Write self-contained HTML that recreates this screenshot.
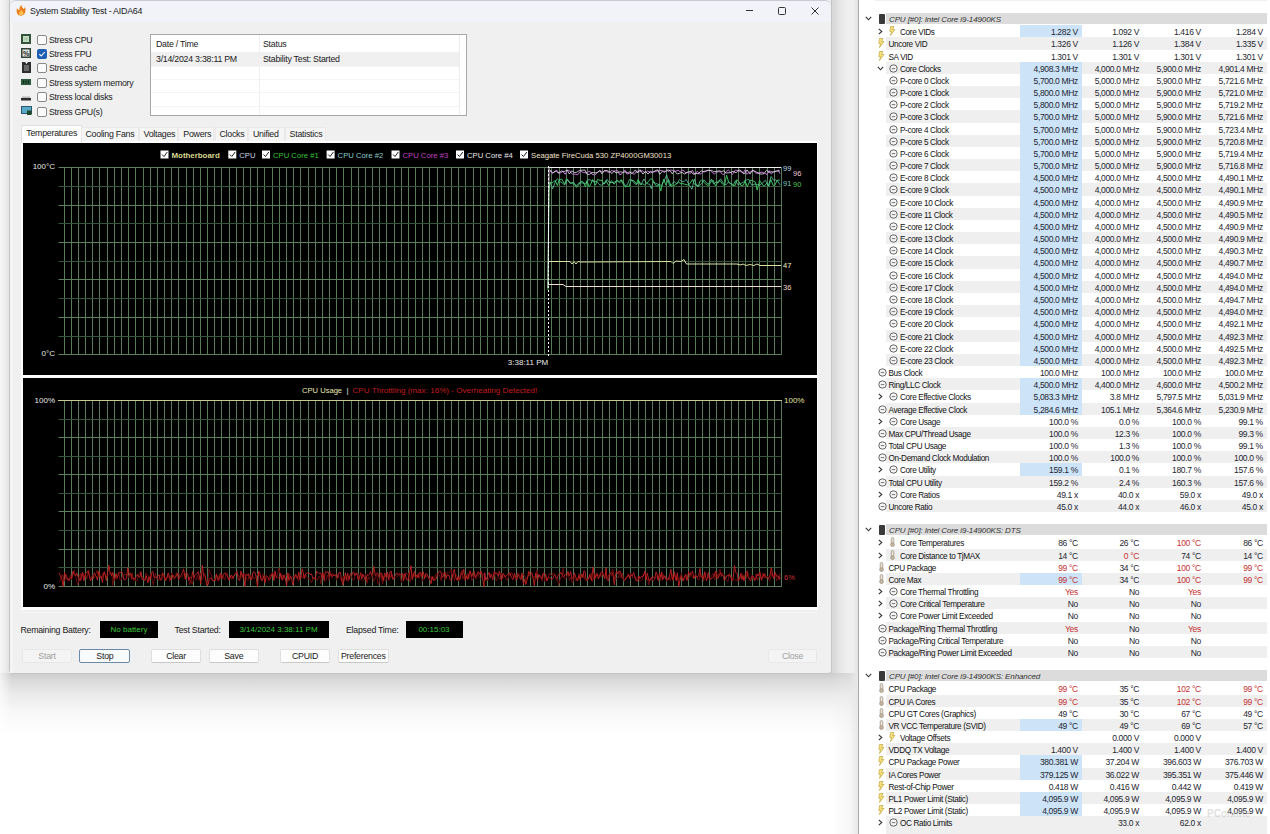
<!DOCTYPE html><html><head><meta charset="utf-8"><style>
*{margin:0;padding:0;box-sizing:border-box}
html,body{width:1270px;height:834px;overflow:hidden;background:#ffffff;font-family:"Liberation Sans", sans-serif;position:relative}
.a{position:absolute;white-space:nowrap}
.ui{font-size:8.8px;letter-spacing:-0.25px;color:#1a1a1a;line-height:10px}
.btn{position:absolute;height:14px;background:#fdfdfd;border:1px solid #dedede;border-bottom-color:#c8c8c8;border-radius:2px;font-size:8.8px;letter-spacing:-0.25px;line-height:12.5px;text-align:center;color:#1a1a1a}
.blk{position:absolute;height:17px;background:#000;color:#3cc83c;font-size:8px;line-height:17px;text-align:center}
.hw{font-size:8.2px;letter-spacing:-0.35px;line-height:12px;color:#111}
.v{position:absolute;text-align:right;font-size:8.5px;letter-spacing:-0.35px;line-height:12px;color:#1e2630;white-space:nowrap}
</style></head><body>

<div class="a" style="left:0;top:0;width:9px;height:700px;background:linear-gradient(90deg,#f7f7f7 0px,#ececec 6px,#e2e2e2 9px)"></div>
<div class="a" style="left:831px;top:0;width:27px;height:674px;background:linear-gradient(90deg,#d8d8d8 1px,#dadada 4px,#e6e6e6 9px,#efefef 17px,#eeeeee 22px,#e5e5e5 26px)"></div>
<div class="a" style="left:0;top:673px;width:858px;height:62px;background:linear-gradient(180deg,#cdcdcd 0px,#dadada 8px,#ebebeb 22px,#f8f8f8 40px,#ffffff 62px)"></div>
<div class="a" style="left:0;top:673px;width:12px;height:62px;background:linear-gradient(90deg,rgba(255,255,255,0.7),rgba(255,255,255,0))"></div>
<div class="a" style="left:831px;top:673px;width:27px;height:161px;background:linear-gradient(90deg,rgba(236,236,236,0) 0px,rgba(236,236,236,0.4) 18px,#e8e8e8 27px)"></div>
<div class="a" style="left:9px;top:0;width:823px;height:674px;background:#f0f0f0;border:1px solid #c4c4c4;border-top:none;border-radius:0 0 4px 4px">
</div>
<div class="a" style="left:10px;top:0;width:821px;height:22px;background:#f1f3f9;border-top:1px solid #c8ccd4;border-radius:6px 6px 0 0"></div>
<svg class="a" style="left:15.5px;top:5px" width="10" height="11" viewBox="0 0 10 11"><path d="M1 3 C2 5 3 5 3.5 5 C3 3 4 1 5.5 0 C5.5 2 7 3 7.5 4 C8 3.5 8.5 3 9 2 C10 5 9.5 8 8 9.5 C6.5 11 3 11 1.8 9.5 C0.5 8 0.3 5 1 3Z" fill="#e8801c"/><path d="M5 5 C6 6.5 8 7 7.5 9 C7 10.5 3.5 10.5 3 9 C2.7 7.5 4 7 5 5Z" fill="#ffbe50"/></svg>
<div class="a" style="left:30px;top:6px;font-size:8.9px;letter-spacing:-0.25px;line-height:11px;color:#1a1a1a">System Stability Test - AIDA64</div>
<div class="a" style="left:746px;top:10px;width:7px;height:1px;background:#333"></div>
<div class="a" style="left:778px;top:7px;width:8px;height:8px;border:1px solid #333;border-radius:1.5px"></div>
<svg class="a" style="left:811px;top:7px" width="8" height="8" viewBox="0 0 8 8"><path d="M0.5 0.5L7.5 7.5M7.5 0.5L0.5 7.5" stroke="#333" stroke-width="1"/></svg>
<svg class="a" style="left:21px;top:34px" width="10" height="10" viewBox="0 0 10 10"><rect x="0" y="0" width="10" height="10" fill="#34543a"/><rect x="2" y="2" width="6" height="6" fill="#c4dcc4"/><rect x="3.5" y="3.5" width="3" height="3" fill="#a8c8a8"/></svg>
<div class="a" style="left:37px;top:34.5px;width:10px;height:10px;background:#fafafa;border:1px solid #8a8a8a;border-radius:2px"></div>
<div class="a ui" style="left:49px;top:34.6px">Stress CPU</div>
<svg class="a" style="left:21px;top:48px" width="10" height="10" viewBox="0 0 10 10"><rect x="0.75" y="0.75" width="8.5" height="8.5" fill="#dfe6df" stroke="#34443a" stroke-width="1.5"/><text x="5" y="8" text-anchor="middle" font-family="Liberation Sans" font-size="7" font-weight="bold" fill="#222">%</text></svg>
<div class="a" style="left:37px;top:48.9px;width:10px;height:10px;background:#1e5fb4;border-radius:2px"></div>
<svg class="a" style="left:37px;top:48.9px" width="10" height="10" viewBox="0 0 10 10"><path d="M2.3 5.2L4.2 7L7.8 3" stroke="#fff" stroke-width="1.1" fill="none"/></svg>
<div class="a ui" style="left:49px;top:49.0px">Stress FPU</div>
<svg class="a" style="left:21.5px;top:62px" width="9" height="11" viewBox="0 0 9 11"><path d="M0 0H3L4.5 2L6 0H9V11H0Z" fill="#2e2e2e"/><rect x="2" y="3" width="5" height="6" fill="#6a6a6a"/></svg>
<div class="a" style="left:37px;top:63.3px;width:10px;height:10px;background:#fafafa;border:1px solid #8a8a8a;border-radius:2px"></div>
<div class="a ui" style="left:49px;top:63.4px">Stress cache</div>
<svg class="a" style="left:21px;top:78.5px" width="10" height="6" viewBox="0 0 10 6"><rect width="10" height="6" fill="#2c5a3c"/><rect x="2" y="1.5" width="1" height="3" fill="#0e2a18"/><rect x="4.5" y="1.5" width="1" height="3" fill="#0e2a18"/><rect x="7" y="1.5" width="1" height="3" fill="#0e2a18"/></svg>
<div class="a" style="left:37px;top:77.7px;width:10px;height:10px;background:#fafafa;border:1px solid #8a8a8a;border-radius:2px"></div>
<div class="a ui" style="left:49px;top:77.8px">Stress system memory</div>
<svg class="a" style="left:21px;top:96px" width="10" height="5" viewBox="0 0 10 5"><rect x="1" y="0.5" width="8" height="1.5" fill="#b8b8b8"/><rect x="0" y="2" width="10" height="2.5" fill="#2e2e2e"/></svg>
<div class="a" style="left:37px;top:92.1px;width:10px;height:10px;background:#fafafa;border:1px solid #8a8a8a;border-radius:2px"></div>
<div class="a ui" style="left:49px;top:92.2px">Stress local disks</div>
<svg class="a" style="left:20.5px;top:106px" width="11" height="9" viewBox="0 0 11 9"><rect x="0.5" y="0.5" width="10" height="7" fill="#58a8c8" stroke="#2a5a70" stroke-width="1"/><rect x="6" y="4.5" width="4.5" height="4.5" fill="#1e4a2a"/></svg>
<div class="a" style="left:37px;top:106.5px;width:10px;height:10px;background:#fafafa;border:1px solid #8a8a8a;border-radius:2px"></div>
<div class="a ui" style="left:49px;top:106.6px">Stress GPU(s)</div>
<div class="a" style="left:150px;top:34px;width:317px;height:82px;background:#fff;border:1px solid #a8a8a8"></div>
<div class="a" style="left:151px;top:52px;width:309px;height:14px;background:#f0f0f0"></div>
<div class="a" style="left:151px;top:66px;width:309px;height:1px;background:#f4f4f4"></div>
<div class="a" style="left:151px;top:79px;width:309px;height:1px;background:#f4f4f4"></div>
<div class="a" style="left:151px;top:92px;width:309px;height:1px;background:#f4f4f4"></div>
<div class="a" style="left:151px;top:106px;width:309px;height:1px;background:#f4f4f4"></div>
<div class="a" style="left:259px;top:35px;width:1px;height:80px;background:#f0f0f0"></div>
<div class="a" style="left:459px;top:35px;width:1px;height:80px;background:#ececec"></div>
<div class="a ui" style="left:156px;top:38.5px">Date / Time</div>
<div class="a ui" style="left:263px;top:38.5px">Status</div>
<div class="a ui" style="left:156px;top:54px">3/14/2024 3:38:11 PM</div>
<div class="a ui" style="left:263px;top:54px">Stability Test: Started</div>
<div class="a" style="left:21px;top:141px;width:797px;height:469px;background:#fefefe"></div>
<div class="a" style="left:21px;top:612px;width:797px;height:1px;background:#f6f6f6"></div>
<div class="a" style="left:10px;top:22px;width:3px;height:651px;background:#f4f4f4"></div>
<div class="a" style="left:21px;top:125px;width:61px;height:17px;background:#fdfdfd;border:1px solid #e0e0e0;border-bottom:none"></div>
<div class="a ui" style="left:26.3px;top:127.5px">Temperatures</div>
<div class="a" style="left:80.5px;top:127px;width:58.099999999999994px;height:14px;background:#f5f5f5;border:1px solid #e9e9e9;border-bottom:none"></div>
<div class="a ui" style="left:85.5px;top:128.8px">Cooling Fans</div>
<div class="a" style="left:138.5px;top:127px;width:39.900000000000006px;height:14px;background:#f5f5f5;border:1px solid #e9e9e9;border-bottom:none"></div>
<div class="a ui" style="left:143.5px;top:128.8px">Voltages</div>
<div class="a" style="left:178.3px;top:127px;width:35.89999999999998px;height:14px;background:#f5f5f5;border:1px solid #e9e9e9;border-bottom:none"></div>
<div class="a ui" style="left:183.3px;top:128.8px">Powers</div>
<div class="a" style="left:214.5px;top:127px;width:33.19999999999999px;height:14px;background:#f5f5f5;border:1px solid #e9e9e9;border-bottom:none"></div>
<div class="a ui" style="left:219.5px;top:128.8px">Clocks</div>
<div class="a" style="left:248px;top:127px;width:36.69999999999999px;height:14px;background:#f5f5f5;border:1px solid #e9e9e9;border-bottom:none"></div>
<div class="a ui" style="left:253px;top:128.8px">Unified</div>
<div class="a" style="left:284.6px;top:127px;width:41.69999999999999px;height:14px;background:#f5f5f5;border:1px solid #e9e9e9;border-bottom:none"></div>
<div class="a ui" style="left:289.6px;top:128.8px">Statistics</div>
<svg class="a" style="left:0;top:0" width="830" height="620" viewBox="0 0 830 620">
<rect x="23" y="143" width="794" height="232" fill="#000"/>
<rect x="58" y="167" width="724" height="188" fill="#000"/>
<path d="M64.5 167.5V354.5M71.5 167.5V354.5M78.5 167.5V354.5M85.5 167.5V354.5M92.5 167.5V354.5M99.5 167.5V354.5M107.5 167.5V354.5M114.5 167.5V354.5M121.5 167.5V354.5M128.5 167.5V354.5M135.5 167.5V354.5M143.5 167.5V354.5M150.5 167.5V354.5M157.5 167.5V354.5M164.5 167.5V354.5M171.5 167.5V354.5M178.5 167.5V354.5M186.5 167.5V354.5M193.5 167.5V354.5M200.5 167.5V354.5M207.5 167.5V354.5M214.5 167.5V354.5M221.5 167.5V354.5M229.5 167.5V354.5M236.5 167.5V354.5M243.5 167.5V354.5M250.5 167.5V354.5M257.5 167.5V354.5M264.5 167.5V354.5M272.5 167.5V354.5M279.5 167.5V354.5M286.5 167.5V354.5M293.5 167.5V354.5M300.5 167.5V354.5M308.5 167.5V354.5M315.5 167.5V354.5M322.5 167.5V354.5M329.5 167.5V354.5M336.5 167.5V354.5M343.5 167.5V354.5M351.5 167.5V354.5M358.5 167.5V354.5M365.5 167.5V354.5M372.5 167.5V354.5M379.5 167.5V354.5M386.5 167.5V354.5M394.5 167.5V354.5M401.5 167.5V354.5M408.5 167.5V354.5M415.5 167.5V354.5M422.5 167.5V354.5M429.5 167.5V354.5M437.5 167.5V354.5M444.5 167.5V354.5M451.5 167.5V354.5M458.5 167.5V354.5M465.5 167.5V354.5M473.5 167.5V354.5M480.5 167.5V354.5M487.5 167.5V354.5M494.5 167.5V354.5M501.5 167.5V354.5M508.5 167.5V354.5M516.5 167.5V354.5M523.5 167.5V354.5M530.5 167.5V354.5M537.5 167.5V354.5M544.5 167.5V354.5M551.5 167.5V354.5M559.5 167.5V354.5M566.5 167.5V354.5M573.5 167.5V354.5M580.5 167.5V354.5M587.5 167.5V354.5M594.5 167.5V354.5M602.5 167.5V354.5M609.5 167.5V354.5M616.5 167.5V354.5M623.5 167.5V354.5M630.5 167.5V354.5M638.5 167.5V354.5M645.5 167.5V354.5M652.5 167.5V354.5M659.5 167.5V354.5M666.5 167.5V354.5M673.5 167.5V354.5M681.5 167.5V354.5M688.5 167.5V354.5M695.5 167.5V354.5M702.5 167.5V354.5M709.5 167.5V354.5M716.5 167.5V354.5M724.5 167.5V354.5M731.5 167.5V354.5M738.5 167.5V354.5M745.5 167.5V354.5M752.5 167.5V354.5M759.5 167.5V354.5M767.5 167.5V354.5M774.5 167.5V354.5M781.5 167.5V354.5M781.5 167.5V354.5" stroke="#587a58" stroke-width="1" fill="none"/><path d="M58.5 167.5H781.5M58.5 205.5H781.5M58.5 242.5H781.5M58.5 279.5H781.5M58.5 317.5H781.5M58.5 354.5H781.5" stroke="#5c805c" stroke-width="1" fill="none"/><path d="M58.5 186.5H781.5M58.5 223.5H781.5M58.5 261.5H781.5M58.5 298.5H781.5M58.5 336.5H781.5" stroke="#36543a" stroke-width="1" fill="none"/>
<polyline points="548,284.5 563,284.5 566,286.5 781,286.5" stroke="#f0dcc8" stroke-width="1" fill="none"/>
<polyline points="548,261.5 570,261.5 572,264 574,261.5 576,264 578,261.5 581,262 671,261.5 673,263.5 676,261 681,261.5 684,259.5 686,263.5 687,264 737,264 740,265 743,264 746,265.5 750,264.5 754,265.5 757,264 760,265.5 781,265.5" stroke="#dce2a4" stroke-width="1" fill="none"/>
<polyline points="548,290 549,190 550.0,182.6 552.8,182.7 555.1,180.4 557.4,185.5 559.4,179.6 561.8,179.2 564.7,184.3 566.4,178.9 568.0,180.4 569.6,182.7 572.3,183.2 574.5,184.4 576.4,187.2 579.0,184.7 580.9,181.2 583.4,182.2 585.5,186.8 587.0,180.6 589.2,187.0 590.8,184.1 592.7,179.5 595.5,185.2 597.4,179.6 600.0,180.3 602.1,180.4 603.8,184.2 605.9,180.6 608.7,185.5 611.4,180.6 614.1,184.2 616.9,180.6 619.5,181.6 621.1,179.6 623.0,183.9 625.1,186.9 627.4,186.1 629.2,186.4 631.0,180.4 633.8,180.5 636.5,183.9 638.2,179.1 640.1,184.7 642.7,183.8 644.5,184.9 646.3,183.5 648.7,181.2 650.5,178.9 652.6,179.3 654.6,183.6 656.6,186.3 659.0,184.6 660.8,190.9 663.6,179.0 665.8,184.9 668.6,179.4 671.1,186.4 673.6,185.5 675.6,184.6 678.3,182.3 681.0,183.6 683.0,183.7 684.7,184.2 687.4,184.9 689.9,183.7 692.5,179.5 694.1,183.9 695.9,184.7 698.3,186.5 699.9,181.3 701.7,180.2 704.1,182.5 706.0,184.4 708.2,185.6 710.9,182.0 712.8,179.9 715.5,185.9 718.2,181.1 720.4,181.1 722.5,184.1 724.4,185.8 726.6,175.2 728.5,181.8 730.8,184.2 732.6,185.3 735.1,185.5 736.8,179.7 739.2,181.9 741.0,185.7 743.5,185.1 745.1,180.7 747.3,186.8 750.2,180.1 752.6,180.7 755.4,182.1 757.2,190.1 759.6,180.5 762.2,184.2 764.0,186.4 766.8,183.3 768.8,186.4 770.8,179.5 773.1,185.3 774.6,185.6 777.2,180.3 779.8,180.0" stroke="#3cc25a" stroke-width="1" fill="none"/>
<polyline points="550.0,182.3 552.6,188.8 555.2,182.2 557.3,178.7 560.3,181.5 562.3,183.1 564.7,184.9 567.6,179.4 570.4,183.7 573.5,181.9 576.2,186.1 579.1,182.9 582.1,182.9 583.9,183.3 586.2,183.3 588.8,179.3 591.6,180.7 594.6,181.6 596.6,181.2 599.1,184.5 601.4,185.2 603.1,183.8 605.0,183.3 607.0,179.3 609.3,182.5 612.1,182.6 614.2,182.2 617.2,180.5 619.5,182.9 622.3,180.4 625.3,185.7 627.3,184.7 629.3,179.6 631.8,179.9 634.7,183.8 636.6,184.7 639.0,181.4 641.3,184.3 643.8,179.0 646.8,183.6 649.6,184.3 651.3,188.6 653.3,182.0 655.8,183.4 658.9,184.5 661.4,185.5 663.9,181.3 666.7,174.8 669.5,185.5 672.0,184.7 673.8,181.4 676.8,183.9 679.4,179.6 682.1,181.7 684.3,181.2 686.2,179.4 688.9,184.5 691.9,189.3 694.3,179.1 696.6,185.4 698.6,186.0 701.5,183.9 704.0,179.8 706.1,182.5 708.5,184.1 711.3,179.1 713.6,184.0 716.0,182.0 717.9,183.0 720.6,178.8 723.6,183.5 726.0,184.8 728.4,182.0 730.6,183.5 733.5,184.7 735.4,180.7 738.0,184.8 740.3,183.7 743.1,182.4 745.9,180.1 748.8,179.5 751.8,185.3 754.5,184.1 757.5,184.6 759.7,185.3 762.6,182.9 765.4,180.2 768.3,185.7 771.1,176.5 773.5,180.2 775.1,179.7 777.5,180.9 780.4,185.2" stroke="#60d0a8" stroke-width="1" fill="none" opacity="0.75"/>
<polyline points="550.0,171.2 552.6,173.5 555.3,170.9 557.3,170.7 559.2,173.7 561.0,172.7 562.9,171.4 565.1,174.3 567.5,170.0 569.5,170.7 572.3,174.1 575.1,174.2 577.7,174.8 580.4,171.2 583.2,172.4 585.8,172.8 588.0,171.8 590.2,171.5 592.0,174.2 594.7,175.0 597.3,172.8 599.9,170.6 602.5,172.2 604.3,171.0 606.7,171.2 608.9,173.0 611.1,170.6 613.4,171.1 615.3,170.9 617.4,170.3 619.9,174.9 622.1,173.6 625.0,170.1 626.8,174.1 629.5,173.2 631.4,172.1 634.2,174.5 636.9,171.0 639.7,171.8 642.3,170.6 645.2,173.0 647.8,171.0 650.3,172.9 652.7,171.8 655.3,171.7 657.4,170.8 659.9,170.5 661.8,170.3 664.3,172.8 666.7,170.1 668.9,171.7 670.6,169.9 673.6,170.5 675.7,171.3 678.1,170.3 680.3,171.8 683.1,169.9 685.2,172.5 688.1,172.6 690.4,173.4 692.4,170.1 694.7,174.6 697.3,171.2 699.9,174.3 701.9,173.0 704.0,171.2 706.0,171.0 708.1,170.1 710.2,170.4 712.9,173.0 714.5,173.9 716.4,172.4 718.7,171.6 720.8,172.2 722.5,174.4 724.3,174.2 726.2,171.5 728.4,170.1 730.2,171.8 732.4,174.5 735.4,170.1 737.7,170.6 740.4,171.6 743.3,172.7 745.0,169.9 747.0,174.4 748.8,172.4 750.9,171.7 753.7,171.0 756.3,173.4 759.2,172.6 762.0,172.2 764.4,173.1 767.2,174.6 769.0,170.6 771.3,174.1 773.7,171.5 776.6,171.4 778.3,170.2 780.0,173.7" stroke="#c070d0" stroke-width="1" fill="none"/>
<polyline points="550.0,170.1 552.9,172.7 556.2,170.9 558.4,173.1 561.3,171.1 564.2,171.5 567.2,170.2 569.4,173.9 571.7,170.8 574.8,172.6 576.9,172.2 579.7,170.4 582.6,170.2 584.9,170.0 587.0,174.3 589.5,174.4 592.0,172.5 595.2,172.9 597.2,172.4 600.0,170.5 601.9,173.8 604.6,170.5 607.1,170.6 610.2,172.0 612.1,173.5 614.1,170.9 616.0,173.2 618.0,172.1 619.9,171.9 622.8,172.2 625.3,171.9 627.8,172.5 629.8,171.9 632.0,173.8 635.3,169.9 637.3,173.0 640.0,169.7 643.0,174.1 645.4,171.3 648.2,174.1 650.4,171.1 652.5,172.6 655.0,170.8 657.5,169.8 659.8,174.3 662.5,171.0 665.8,171.3 668.0,169.8 670.1,170.6 672.2,173.8 674.5,170.8 677.2,174.0 679.5,173.3 681.9,172.3 684.6,174.1 687.7,172.0 690.8,171.4 693.2,174.2 695.9,173.3 698.2,174.0 701.0,170.8 704.2,171.9 706.6,170.9 708.6,170.6 711.5,170.3 713.7,171.7 716.4,171.4 719.4,170.8 721.8,171.6 723.8,170.7 725.9,173.1 727.9,172.8 730.1,172.7 732.9,171.3 736.2,172.8 738.9,169.8 741.3,170.9 743.9,174.1 747.1,169.9 750.0,174.1 752.6,170.1 755.8,171.6 759.1,173.8 762.3,174.1 764.2,173.4 766.5,170.2 768.9,172.4 770.7,171.8 773.8,172.0 776.4,171.0 779.7,170.8" stroke="#e8e8f0" stroke-width="1" fill="none" opacity="0.8"/>
<polyline points="548,288 549,167.5 781,167.5" stroke="#f0f0f0" stroke-width="1" fill="none"/>
<path d="M548.5 166V357" stroke="#fff" stroke-width="1" stroke-dasharray="2,2"/>
<rect x="160.5" y="150.5" width="8" height="8" fill="#fff"/>
<path d="M162.0 154.5L164.0 156.5L167.3 152" stroke="#222" stroke-width="1" fill="none"/>
<text x="171.5" y="157.8" font-family="Liberation Sans" font-size="7.9" fill="#d8d890" font-weight="bold">Motherboard</text>
<rect x="228.3" y="150.5" width="8" height="8" fill="#fff"/>
<path d="M229.8 154.5L231.8 156.5L235.10000000000002 152" stroke="#222" stroke-width="1" fill="none"/>
<text x="239.3" y="157.8" font-family="Liberation Sans" font-size="7.7" fill="#c8d4e8">CPU</text>
<rect x="262" y="150.5" width="8" height="8" fill="#fff"/>
<path d="M263.5 154.5L265.5 156.5L268.8 152" stroke="#222" stroke-width="1" fill="none"/>
<text x="273" y="157.8" font-family="Liberation Sans" font-size="7.7" fill="#38c038">CPU Core #1</text>
<rect x="326.6" y="150.5" width="8" height="8" fill="#fff"/>
<path d="M328.1 154.5L330.1 156.5L333.40000000000003 152" stroke="#222" stroke-width="1" fill="none"/>
<text x="337.6" y="157.8" font-family="Liberation Sans" font-size="7.7" fill="#88c8c8">CPU Core #2</text>
<rect x="391.5" y="150.5" width="8" height="8" fill="#fff"/>
<path d="M393.0 154.5L395.0 156.5L398.3 152" stroke="#222" stroke-width="1" fill="none"/>
<text x="402.5" y="157.8" font-family="Liberation Sans" font-size="7.7" fill="#c040c0">CPU Core #3</text>
<rect x="456" y="150.5" width="8" height="8" fill="#fff"/>
<path d="M457.5 154.5L459.5 156.5L462.8 152" stroke="#222" stroke-width="1" fill="none"/>
<text x="467" y="157.8" font-family="Liberation Sans" font-size="7.7" fill="#e8e8e8">CPU Core #4</text>
<rect x="520" y="150.5" width="8" height="8" fill="#fff"/>
<path d="M521.5 154.5L523.5 156.5L526.8 152" stroke="#222" stroke-width="1" fill="none"/>
<text x="531" y="157.8" font-family="Liberation Sans" font-size="7.7" fill="#f4e0c8">Seagate FireCuda 530 ZP4000GM30013</text>
<text x="55" y="168.5" text-anchor="end" font-family="Liberation Sans" font-size="8" fill="#e8e8e8">100°C</text>
<text x="55" y="356" text-anchor="end" font-family="Liberation Sans" font-size="8" fill="#e8e8e8">0°C</text>
<text x="528" y="365" text-anchor="middle" font-family="Liberation Sans" font-size="8" fill="#e8e8e8">3:38:11 PM</text>
<text x="783" y="170.5" font-family="Liberation Sans" font-size="7.5" fill="#b8d8e8">99</text>
<text x="793" y="175.5" font-family="Liberation Sans" font-size="7.5" fill="#e8c8d8">96</text>
<text x="783" y="185.5" font-family="Liberation Sans" font-size="7.5" fill="#70c8c0">91</text>
<text x="793" y="187" font-family="Liberation Sans" font-size="7.5" fill="#50c050">90</text>
<text x="783" y="268" font-family="Liberation Sans" font-size="7.5" fill="#f0f0c8">47</text>
<text x="783" y="289.5" font-family="Liberation Sans" font-size="7.5" fill="#f4dcc8">36</text>
<rect x="23" y="378" width="794" height="229" fill="#000"/>
<rect x="58" y="400" width="724" height="187" fill="#000"/>
<path d="M64.5 400.5V586.5M71.5 400.5V586.5M78.5 400.5V586.5M85.5 400.5V586.5M92.5 400.5V586.5M99.5 400.5V586.5M107.5 400.5V586.5M114.5 400.5V586.5M121.5 400.5V586.5M128.5 400.5V586.5M135.5 400.5V586.5M143.5 400.5V586.5M150.5 400.5V586.5M157.5 400.5V586.5M164.5 400.5V586.5M171.5 400.5V586.5M178.5 400.5V586.5M186.5 400.5V586.5M193.5 400.5V586.5M200.5 400.5V586.5M207.5 400.5V586.5M214.5 400.5V586.5M221.5 400.5V586.5M229.5 400.5V586.5M236.5 400.5V586.5M243.5 400.5V586.5M250.5 400.5V586.5M257.5 400.5V586.5M264.5 400.5V586.5M272.5 400.5V586.5M279.5 400.5V586.5M286.5 400.5V586.5M293.5 400.5V586.5M300.5 400.5V586.5M308.5 400.5V586.5M315.5 400.5V586.5M322.5 400.5V586.5M329.5 400.5V586.5M336.5 400.5V586.5M343.5 400.5V586.5M351.5 400.5V586.5M358.5 400.5V586.5M365.5 400.5V586.5M372.5 400.5V586.5M379.5 400.5V586.5M386.5 400.5V586.5M394.5 400.5V586.5M401.5 400.5V586.5M408.5 400.5V586.5M415.5 400.5V586.5M422.5 400.5V586.5M429.5 400.5V586.5M437.5 400.5V586.5M444.5 400.5V586.5M451.5 400.5V586.5M458.5 400.5V586.5M465.5 400.5V586.5M473.5 400.5V586.5M480.5 400.5V586.5M487.5 400.5V586.5M494.5 400.5V586.5M501.5 400.5V586.5M508.5 400.5V586.5M516.5 400.5V586.5M523.5 400.5V586.5M530.5 400.5V586.5M537.5 400.5V586.5M544.5 400.5V586.5M551.5 400.5V586.5M559.5 400.5V586.5M566.5 400.5V586.5M573.5 400.5V586.5M580.5 400.5V586.5M587.5 400.5V586.5M594.5 400.5V586.5M602.5 400.5V586.5M609.5 400.5V586.5M616.5 400.5V586.5M623.5 400.5V586.5M630.5 400.5V586.5M638.5 400.5V586.5M645.5 400.5V586.5M652.5 400.5V586.5M659.5 400.5V586.5M666.5 400.5V586.5M673.5 400.5V586.5M681.5 400.5V586.5M688.5 400.5V586.5M695.5 400.5V586.5M702.5 400.5V586.5M709.5 400.5V586.5M716.5 400.5V586.5M724.5 400.5V586.5M731.5 400.5V586.5M738.5 400.5V586.5M745.5 400.5V586.5M752.5 400.5V586.5M759.5 400.5V586.5M767.5 400.5V586.5M774.5 400.5V586.5M781.5 400.5V586.5M781.5 400.5V586.5" stroke="#587a58" stroke-width="1" fill="none"/><path d="M58.5 400.5H781.5M58.5 437.5H781.5M58.5 474.5H781.5M58.5 511.5H781.5M58.5 549.5H781.5M58.5 586.5H781.5" stroke="#5c805c" stroke-width="1" fill="none"/><path d="M58.5 419.5H781.5M58.5 456.5H781.5M58.5 493.5H781.5M58.5 530.5H781.5M58.5 567.5H781.5" stroke="#36543a" stroke-width="1" fill="none"/>
<path d="M58 400.5H782" stroke="#c8c890" stroke-width="1"/>
<polyline points="59.0,581.1 59.9,581.5 60.8,578.4 62.3,574.6 63.3,577.9 64.7,580.8 65.5,580.4 66.6,574.2 67.9,580.9 69.4,577.6 70.7,574.8 71.7,579.5 73.1,573.8 74.4,570.1 75.4,575.1 76.5,580.8 77.8,585.1 79.3,576.3 80.4,573.4 81.3,580.1 82.3,572.6 83.3,572.8 84.3,580.7 85.4,573.1 86.8,579.2 87.7,574.3 88.7,569.8 89.9,577.8 91.3,576.8 92.6,575.7 94.0,578.0 94.9,577.0 95.9,574.0 97.1,570.3 98.0,574.4 99.5,574.1 100.4,576.7 101.5,579.1 102.9,572.8 104.4,572.8 105.6,575.9 106.9,576.7 107.9,574.9 109.2,573.9 110.5,573.0 111.8,572.9 112.7,585.4 113.7,577.3 114.8,580.3 115.6,575.9 116.6,579.7 117.8,575.8 119.0,574.2 120.0,580.0 121.3,579.9 122.3,576.2 123.7,576.0 124.7,574.0 125.8,574.6 127.3,573.9 128.8,577.9 130.2,572.7 131.5,579.8 132.4,573.1 133.6,580.9 134.8,578.1 135.9,581.2 137.2,580.6 138.5,575.4 139.5,573.0 140.6,572.7 141.5,576.5 142.5,576.8 143.6,579.8 144.8,580.4 145.9,572.9 147.1,574.5 148.1,575.3 149.0,581.4 149.9,576.8 151.1,573.1 152.2,580.7 153.4,585.3 154.7,575.7 155.6,573.2 156.8,579.5 157.9,578.2 158.8,580.8 159.8,574.7 161.4,575.5 162.6,574.1 164.1,577.5 165.1,580.3 166.1,577.3 167.4,577.9 168.6,575.7 169.7,581.3 170.7,576.2 172.1,572.9 173.2,579.5 174.5,578.9 175.4,575.9 176.5,572.6 177.9,573.9 179.1,573.9 180.2,576.8 181.1,577.0 182.3,576.6 183.5,574.6 185.0,573.0 185.9,579.9 187.4,578.1 188.5,579.1 189.9,584.6 191.0,579.0 192.1,584.3 193.0,581.1 194.2,576.0 195.5,580.2 196.5,578.0 197.5,575.0 198.4,579.9 199.8,576.6 200.7,573.5 202.1,579.6 203.1,578.5 204.2,573.2 205.2,574.2 206.1,580.6 207.6,584.3 209.1,569.0 210.0,572.8 211.2,574.5 212.7,581.2 213.7,580.7 215.0,578.7 216.5,573.7 217.9,581.2 219.2,575.6 220.5,578.5 221.7,574.5 222.7,575.4 223.6,578.6 224.8,580.0 225.7,573.3 227.1,572.7 228.4,579.3 229.7,579.3 230.7,574.9 231.6,579.3 233.0,577.1 234.6,575.0 236.1,572.9 237.4,572.8 238.6,576.0 239.9,577.0 241.4,578.0 242.4,577.9 243.9,573.0 245.4,576.0 246.8,579.0 247.9,580.5 249.3,575.0 250.4,575.1 251.3,579.8 252.3,574.6 253.6,578.4 254.8,578.3 256.4,576.6 257.9,573.5 258.9,573.8 260.2,576.5 261.4,580.2 262.5,574.7 263.7,573.6 264.8,580.4 266.3,579.0 267.7,580.2 268.9,581.0 269.7,574.7 270.7,575.9 271.8,573.0 272.9,572.7 274.1,577.8 275.4,577.6 276.6,577.8 277.8,572.8 278.8,568.1 280.2,574.3 281.4,579.0 282.7,575.1 283.9,579.7 285.0,574.5 286.1,574.9 287.1,575.1 288.4,578.1 289.7,573.7 290.9,579.2 291.8,576.8 293.2,576.5 294.1,577.0 295.0,577.2 296.3,574.6 297.1,575.2 298.3,581.4 299.5,576.5 301.0,575.5 302.5,578.2 303.6,573.4 305.0,577.0 306.4,575.5 307.9,578.9 309.2,578.3 310.6,580.7 311.5,582.8 312.7,578.0 313.7,577.0 314.9,578.9 316.0,578.2 317.4,580.5 318.4,576.8 319.7,576.1 320.9,583.9 322.4,573.4 323.7,575.4 324.8,581.4 326.3,580.1 327.4,575.1 328.9,580.4 330.4,571.4 331.5,578.3 332.7,573.3 334.2,575.6 335.5,575.0 336.7,580.3 337.6,577.0 339.1,577.3 340.4,578.5 342.0,581.4 343.3,576.0 344.2,580.7 345.5,577.0 347.0,579.3 348.2,581.5 349.3,575.8 350.3,578.2 351.6,576.7 353.0,580.2 354.4,579.5 355.2,573.4 356.8,573.1 357.9,573.1 359.3,580.1 360.8,579.6 362.3,580.9 363.7,579.9 364.5,578.6 365.5,573.7 367.0,583.4 368.4,576.7 369.3,579.5 370.5,576.9 371.5,576.5 372.4,573.7 373.5,581.4 374.4,580.2 375.6,576.8 376.8,574.9 377.8,583.4 378.8,584.6 380.2,576.9 381.2,573.9 382.6,584.0 384.2,576.5 385.6,581.2 386.6,578.3 388.2,574.7 389.5,573.9 390.8,577.9 392.0,573.8 393.3,580.0 394.2,577.5 395.4,578.6 396.2,577.3 397.4,576.9 398.8,575.2 399.8,574.3 400.8,579.7 401.7,582.8 402.8,574.4 403.7,576.4 404.9,573.8 406.0,572.8 407.3,574.6 408.4,572.9 409.7,581.4 410.6,581.3 411.5,572.5 412.6,577.5 414.0,574.3 415.2,577.5 416.3,578.6 417.3,575.4 418.4,573.1 419.4,578.4 420.5,573.4 421.5,577.8 422.4,581.0 424.0,578.3 424.9,575.3 426.0,577.5 427.1,575.0 428.3,576.1 429.5,579.7 430.9,576.5 432.0,580.0 433.1,576.4 434.4,580.4 435.3,574.9 436.6,574.2 438.1,574.6 439.1,574.7 440.2,577.0 441.2,581.0 442.2,573.3 443.1,572.8 444.6,579.4 445.9,579.4 447.2,572.7 448.6,572.5 449.9,572.8 451.1,569.2 452.1,576.9 453.3,573.7 454.6,580.6 455.7,574.5 457.0,576.3 458.3,581.0 459.2,578.1 460.4,574.1 461.9,570.1 462.8,579.2 464.2,574.9 465.4,575.0 466.4,578.2 467.6,573.3 469.0,578.9 470.2,570.4 471.7,580.2 473.1,579.0 474.3,573.6 475.4,578.5 476.5,578.7 477.8,572.7 479.0,577.1 480.4,578.5 481.6,577.7 483.0,573.4 484.3,575.5 485.3,580.5 486.4,578.0 487.8,580.3 489.1,577.6 490.6,574.0 491.9,574.6 493.2,573.4 494.4,572.7 495.5,578.6 496.4,581.0 497.5,577.6 499.0,578.4 500.3,579.3 501.2,573.0 502.6,577.0 503.5,578.1 504.9,574.6 506.0,578.8 507.6,580.3 509.0,573.9 510.0,576.2 511.2,572.9 512.2,573.1 513.4,577.3 514.6,575.5 515.5,580.5 516.7,578.1 517.6,572.6 519.2,573.9 520.7,577.5 521.8,578.4 523.4,574.0 524.9,576.4 526.1,579.2 527.6,576.8 528.9,574.9 530.1,576.4 531.2,577.2 532.5,577.0 533.4,576.8 534.9,576.8 536.0,573.4 536.9,570.0 538.3,576.5 539.4,576.6 540.7,575.3 542.1,581.2 543.2,572.5 544.8,581.4 545.7,574.3 546.9,581.1 548.3,577.4 549.5,573.0 551.0,575.4 552.0,575.7 553.0,572.8 554.2,574.0 555.1,574.2 556.4,580.5 557.4,577.5 558.5,585.5 559.8,580.6 561.2,576.9 562.2,577.5 563.1,568.3 564.4,578.4 565.7,578.7 567.2,575.7 568.1,572.9 569.4,580.2 570.8,577.0 571.8,581.4 572.8,582.8 573.8,575.0 575.1,579.8 576.5,580.7 577.6,580.6 579.0,573.3 579.9,577.6 581.2,574.0 582.4,575.3 583.8,574.2 585.3,580.4 586.6,580.1 588.0,579.3 589.4,576.0 590.3,573.9 591.2,573.4 592.7,581.3 593.7,578.0 594.6,573.9 595.8,577.7 596.7,573.9 597.6,575.8 598.6,576.0 600.0,574.5 601.2,577.0 602.7,572.6 603.5,575.9 604.8,574.9 605.9,574.5 607.2,578.0 608.7,575.2 610.2,573.0 611.6,576.1 612.8,569.1 614.4,578.3 615.7,579.1 617.1,577.9 618.4,578.1 619.3,572.5 620.3,577.9 621.3,577.2 622.4,573.0 623.7,580.7 625.2,579.9 626.6,578.6 628.1,574.0 629.7,578.6 630.8,573.2 631.6,574.0 632.8,578.2 634.2,577.6 635.1,576.7 636.4,580.0 637.4,576.9 638.5,577.2 639.4,580.7 640.8,580.6 642.2,579.5 643.4,574.3 644.8,572.8 645.8,577.0 646.7,578.1 647.8,580.0 648.9,584.9 650.3,578.3 651.4,580.3 652.2,578.1 653.3,581.4 654.2,580.0 655.8,577.1 657.2,575.6 658.5,581.4 659.7,574.5 660.8,580.7 661.8,574.2 663.1,573.9 664.2,577.8 665.2,575.9 666.5,581.0 667.9,580.4 668.8,576.9 670.3,580.7 671.1,577.3 672.1,573.9 673.0,580.5 674.3,575.0 675.3,577.1 676.6,580.4 678.1,578.1 679.2,579.2 680.1,577.0 681.6,572.7 682.7,580.7 684.2,580.3 685.5,575.0 686.8,581.1 688.0,578.1 689.4,578.0 690.8,572.5 692.0,577.2 693.2,577.4 694.3,577.5 695.4,574.0 696.7,575.1 698.1,580.0 699.0,579.9 700.3,573.2 701.8,576.8 702.8,575.6 703.7,581.4 705.0,572.8 705.9,573.2 707.3,574.9 708.6,577.3 709.9,579.6 711.1,576.9 712.1,574.9 713.3,573.3 714.7,579.9 715.8,574.9 716.7,572.5 717.9,577.3 719.2,572.8 720.0,569.2 721.1,576.7 722.2,572.5 723.5,574.1 724.7,575.1 726.0,579.4 727.0,581.0 728.1,581.5 729.4,573.7 730.4,576.0 731.4,578.6 732.5,581.3 733.5,579.1 734.7,579.7 735.8,579.9 737.0,580.5 738.1,580.5 739.6,579.7 740.7,573.7 741.6,573.2 742.6,574.6 743.6,580.2 745.1,579.9 746.3,578.6 747.2,570.6 748.5,575.1 749.6,578.6 750.9,577.7 752.0,575.0 753.5,580.0 755.0,579.1 756.2,573.9 757.7,580.3 758.8,577.8 760.2,573.7 761.6,580.9 762.8,572.9 764.0,577.9 765.0,573.8 766.0,578.3 767.4,576.0 768.3,577.6 769.5,581.3 770.5,578.6 771.5,573.6 772.5,573.2 773.9,576.9 775.4,574.3 776.6,580.9 777.6,577.9 778.9,579.3 780.3,573.1" stroke="#6a0c0c" stroke-width="1" fill="none"/>
<polyline points="59.0,572.6 60.4,575.8 61.9,579.1 63.2,586.7 64.5,572.4 66.1,577.9 67.8,578.7 69.1,580.6 70.5,577.5 71.4,578.4 73.0,571.2 74.4,575.0 75.9,575.7 76.8,573.0 78.4,577.6 80.0,580.9 81.3,576.6 82.5,572.5 83.7,580.5 84.8,575.8 86.4,572.6 88.0,571.0 89.4,576.2 90.6,580.8 92.0,577.3 93.2,578.6 94.3,572.7 95.3,575.3 96.3,576.2 97.4,580.2 98.9,571.1 100.2,577.7 101.3,576.6 102.5,582.8 103.6,573.9 104.6,571.7 106.3,580.8 107.5,573.5 108.9,565.4 110.1,572.5 111.6,575.8 112.9,572.4 113.9,578.2 114.9,578.2 116.0,573.5 117.3,577.8 118.8,572.4 120.0,572.9 121.6,571.7 122.7,574.0 123.9,579.9 125.0,579.6 126.5,578.6 127.8,567.7 129.3,575.0 130.9,573.3 132.3,578.5 133.3,578.3 134.9,579.0 136.2,576.5 137.6,574.2 138.8,577.2 139.8,577.2 140.9,571.7 142.1,579.7 143.5,579.1 144.8,580.5 146.3,575.7 147.9,582.8 149.0,576.9 150.2,579.0 151.4,573.3 152.8,571.4 154.0,577.0 155.3,577.3 156.8,577.1 157.9,575.8 159.0,574.8 160.5,580.1 161.6,579.8 162.5,572.8 163.9,574.8 165.6,580.9 166.9,577.8 168.2,572.9 169.2,576.1 170.8,580.0 171.9,577.9 173.0,574.9 174.2,577.7 175.7,577.2 177.3,573.2 178.7,579.7 179.7,576.8 180.9,575.5 182.6,572.5 183.6,568.8 185.2,579.2 186.1,572.9 187.5,573.3 189.0,580.3 190.0,576.8 191.6,578.5 192.6,571.6 194.0,577.2 195.5,574.4 196.7,574.0 198.3,571.7 199.6,577.8 200.8,583.8 202.3,565.3 203.6,575.1 205.1,576.2 206.7,585.3 208.1,584.8 209.1,579.5 210.7,577.8 212.2,580.0 213.8,580.7 215.5,580.4 216.4,574.5 217.8,578.6 218.8,580.3 220.4,573.1 221.8,578.8 223.4,574.6 224.6,572.8 226.1,574.6 227.1,575.2 228.0,577.7 229.0,580.3 230.6,576.1 231.7,575.2 233.2,578.5 234.3,575.3 235.6,573.7 236.9,571.4 238.2,579.0 239.7,580.9 240.9,571.0 242.3,576.8 243.4,573.3 244.9,586.6 245.9,574.3 247.3,575.5 248.2,573.6 249.7,578.3 250.7,579.9 251.8,579.5 252.9,572.3 254.6,572.0 256.0,576.1 257.5,586.7 258.8,571.1 260.0,573.6 260.9,578.6 262.2,581.0 263.7,575.9 265.0,583.2 266.2,575.4 267.7,576.9 268.8,579.5 270.4,578.7 271.9,574.4 272.8,573.7 273.9,580.6 275.0,571.1 276.0,576.5 277.4,577.3 278.4,578.0 279.4,578.8 280.7,573.4 282.2,580.3 283.8,575.0 285.3,577.9 286.6,586.0 287.9,572.8 288.9,580.6 290.4,576.3 291.5,577.6 292.8,585.2 294.1,579.2 295.5,574.1 296.6,577.8 297.6,578.5 298.9,572.1 300.0,579.8 300.9,577.3 302.2,568.7 303.3,572.7 304.2,578.7 305.8,573.5 307.4,572.9 309.0,572.8 310.0,574.7 311.5,573.9 312.9,578.4 313.9,578.2 315.2,579.2 316.7,571.3 318.3,573.1 319.8,573.3 320.8,573.1 321.8,577.5 322.9,572.7 324.1,580.3 325.4,571.5 326.9,572.7 328.2,571.7 329.2,576.8 330.8,573.9 332.5,576.5 333.4,575.1 335.0,575.6 336.6,573.7 337.9,577.5 339.0,572.6 340.5,572.6 341.4,578.9 342.8,585.1 344.1,579.5 345.5,572.7 346.5,580.3 347.6,573.2 349.1,579.5 350.6,573.4 351.7,575.3 353.4,571.8 355.0,575.6 356.6,572.9 358.2,579.8 359.2,578.1 360.8,572.7 361.8,579.0 362.8,574.1 364.2,577.3 365.8,580.7 367.2,574.6 368.4,575.4 369.5,574.0 370.6,571.7 371.6,575.1 372.7,574.5 373.7,566.6 375.3,575.6 376.6,573.4 377.7,572.9 378.9,576.9 380.1,573.3 381.7,573.0 383.1,580.6 384.7,572.9 386.0,577.0 387.3,571.9 388.8,580.1 390.2,571.6 391.2,571.1 392.5,579.0 393.9,578.0 395.5,575.0 396.6,572.9 398.2,575.2 399.7,573.6 401.1,575.0 402.6,573.3 403.7,580.6 405.0,573.6 406.6,579.6 408.0,580.1 409.4,574.2 411.0,565.7 412.3,579.6 413.3,575.0 414.6,571.4 415.7,576.9 416.9,575.0 418.1,577.7 419.4,572.8 420.6,572.2 422.0,576.5 423.3,571.8 424.5,578.5 425.8,573.5 427.1,574.2 428.3,577.6 429.8,579.8 431.1,583.7 432.2,576.7 433.3,580.4 434.5,579.9 436.1,579.1 437.7,573.8 439.1,571.3 440.8,571.7 442.1,577.5 443.7,575.2 445.0,571.8 446.0,578.5 447.2,575.0 448.9,575.0 450.2,580.0 451.6,580.5 453.2,572.9 454.3,569.2 455.7,577.0 457.1,580.3 458.0,576.8 459.7,580.2 461.3,573.4 462.5,574.5 463.8,569.3 465.1,580.5 466.7,575.6 467.7,579.5 469.1,573.6 470.2,571.4 471.8,576.7 473.1,572.6 474.2,571.3 475.4,577.4 476.7,574.8 478.4,571.7 479.9,574.4 481.0,571.0 482.5,577.3 483.9,586.7 484.8,572.8 485.8,580.1 487.1,577.4 488.2,574.7 489.1,572.4 490.3,577.7 491.5,574.7 492.8,579.7 494.4,571.3 495.5,573.6 497.1,573.2 498.3,576.5 499.2,571.4 500.5,575.2 501.5,580.7 503.0,573.3 504.7,576.4 505.7,576.6 506.8,575.3 508.4,573.6 510.0,572.9 511.3,577.3 512.9,579.6 514.5,573.2 515.5,577.0 516.9,579.6 518.0,574.5 519.2,576.7 520.9,579.7 522.0,573.0 523.4,584.2 524.8,579.0 525.8,584.6 527.3,579.3 528.8,571.3 530.2,575.3 531.6,572.6 532.9,576.7 534.3,585.6 535.9,573.0 537.5,580.9 538.9,574.4 540.1,577.2 541.8,578.9 542.8,574.6 544.3,573.6 545.5,574.1 546.8,580.8 548.4,577.4 549.4,577.5 550.6,578.1 551.5,579.6 552.8,578.6 554.4,574.7 555.4,576.5 557.0,578.2 558.6,574.5 559.5,574.5 561.0,572.3 562.4,575.5 563.7,576.6 565.3,574.6 566.5,574.7 568.0,571.7 569.4,575.8 570.7,571.6 572.0,578.7 573.2,577.5 574.5,572.9 575.9,577.5 577.4,580.9 579.0,575.4 580.3,580.2 581.8,574.0 582.9,577.7 583.9,571.0 585.1,571.4 586.0,579.1 587.4,580.3 588.5,578.9 589.8,574.6 591.4,580.5 593.1,567.1 594.7,579.1 596.2,573.8 597.2,573.5 598.4,579.0 599.6,576.1 601.1,572.2 602.4,571.8 603.5,575.6 604.8,578.8 606.1,567.7 607.0,579.7 608.5,580.8 609.6,574.3 611.3,572.4 612.9,573.8 614.3,584.7 615.3,576.3 616.5,571.4 617.8,573.8 618.7,571.3 620.4,571.3 621.7,576.9 623.3,579.1 624.6,580.2 626.2,577.2 627.5,576.9 628.6,574.5 629.6,578.1 631.1,574.9 632.2,576.1 633.7,572.3 635.0,577.2 636.3,580.9 638.0,580.7 638.9,576.0 639.9,578.5 640.9,577.0 641.8,576.2 643.3,576.3 644.9,571.1 646.0,580.0 647.3,573.2 648.9,580.6 650.5,579.9 651.7,577.0 653.2,576.5 654.8,578.5 656.0,571.9 657.0,574.0 658.0,580.2 659.5,573.4 660.8,577.2 661.7,571.9 662.7,579.9 664.3,575.7 665.9,579.2 667.2,578.9 668.3,579.7 669.9,574.4 670.9,569.2 671.9,577.2 672.9,579.9 674.5,571.8 676.2,580.7 677.3,572.8 678.8,586.6 679.8,580.9 681.3,576.0 682.8,580.8 684.3,577.2 685.8,574.3 687.0,579.9 688.6,571.6 689.6,575.4 691.2,572.7 692.6,571.1 693.9,578.6 695.5,576.0 697.2,577.3 698.6,575.7 700.0,568.4 701.0,577.1 701.9,576.6 703.1,579.2 704.7,571.8 706.4,580.7 707.4,578.1 708.4,572.6 709.6,579.4 711.2,578.9 712.6,577.8 714.2,575.4 715.8,571.2 716.7,578.4 718.2,578.2 719.3,575.1 720.5,572.8 722.0,575.5 723.1,575.1 724.2,580.5 725.5,578.8 727.1,575.2 728.1,576.4 729.2,574.2 730.4,575.8 731.9,580.2 733.1,578.0 734.5,565.6 735.7,572.5 737.3,573.5 738.2,580.4 739.6,578.4 740.9,573.7 742.0,579.7 743.0,575.5 744.0,580.6 745.6,572.8 746.9,571.7 747.8,576.7 748.9,578.3 750.6,581.0 752.2,576.3 753.4,576.3 754.9,580.5 756.0,578.6 757.4,573.9 758.3,576.0 759.9,571.9 761.4,579.8 762.9,576.4 764.1,573.7 765.5,576.5 767.2,578.3 768.5,578.5 770.1,575.0 771.3,567.9 772.7,576.0 773.7,578.4 775.2,572.4 776.7,576.4 778.3,575.8 779.3,579.4 780.4,577.2" stroke="#c42222" stroke-width="0.9" fill="none"/>
<text x="55" y="403" text-anchor="end" font-family="Liberation Sans" font-size="8" fill="#e8e8e8">100%</text>
<text x="55" y="589" text-anchor="end" font-family="Liberation Sans" font-size="8" fill="#e8e8e8">0%</text>
<text x="784" y="403" font-family="Liberation Sans" font-size="8" fill="#e0e0a0">100%</text>
<text x="784" y="580" font-family="Liberation Sans" font-size="7.5" fill="#c83030">6%</text>
<text x="302" y="393" font-family="Liberation Sans" font-size="7.6" fill="#e8e8b0">CPU Usage</text>
<text x="346.5" y="393" font-family="Liberation Sans" font-size="8" fill="#e8e8e8">|</text>
<text x="352.5" y="393" font-family="Liberation Sans" font-size="8.1" fill="#c01c1c">CPU Throttling (max: 16%) - Overheating Detected!</text>
</svg>
<div class="a ui" style="left:20.4px;top:625px">Remaining Battery:</div>
<div class="blk" style="left:100px;top:621px;width:58px">No battery</div>
<div class="a ui" style="left:174.5px;top:625px">Test Started:</div>
<div class="blk" style="left:228.5px;top:621px;width:100px">3/14/2024 3:38:11 PM</div>
<div class="a ui" style="left:346px;top:625px">Elapsed Time:</div>
<div class="blk" style="left:405.5px;top:621px;width:57px">00:15:03</div>
<div class="btn" style="left:21.7px;top:648.5px;width:50.7px;color:#a0a0a0;background:#f4f4f4;border-color:#e8e8e8;">Start</div>
<div class="btn" style="left:79.4px;top:648.5px;width:51.0px;border-color:#6a8aa8;background:#f8fbfd;">Stop</div>
<div class="btn" style="left:150.8px;top:648.5px;width:50.5px;">Clear</div>
<div class="btn" style="left:208.5px;top:648.5px;width:50.5px;">Save</div>
<div class="btn" style="left:279.6px;top:648.5px;width:50.9px;">CPUID</div>
<div class="btn" style="left:337.7px;top:648.5px;width:51.3px;">Preferences</div>
<div class="btn" style="left:767.7px;top:648.5px;width:49.7px;color:#a0a0a0;background:#f4f4f4;border-color:#e8e8e8;">Close</div>
<div class="a" style="left:858px;top:0;width:412px;height:834px;background:#fff;border-left:1px solid #a8a8a8"></div>
<div class="a" style="left:875px;top:0;width:392px;height:1px;background:#f0f0f0"></div>
<div class="a" style="left:886px;top:13px;width:381px;height:11px;background:#dcdcdc"></div>
<svg class="a" style="left:865px;top:16px" width="7" height="5" viewBox="0 0 7 5"><path d="M0.8 0.8L3.5 3.8L6.2 0.8" stroke="#333" stroke-width="1.1" fill="none"/></svg>
<div class="a" style="left:878.5px;top:14px;width:6px;height:9.5px;background:#3a3a3a;border-radius:1px"></div>
<div class="a hw" style="left:889px;top:14px;font-style:italic;font-size:8px;letter-spacing:-0.12px;color:#333">CPU [#0]: Intel Core i9-14900KS</div>
<div class="a" style="left:1020px;top:25px;width:62px;height:12px;background:#cce3f8"></div>
<svg class="a" style="left:878px;top:28px" width="5" height="7" viewBox="0 0 5 7"><path d="M0.8 0.8L3.8 3.5L0.8 6.2" stroke="#333" stroke-width="1.1" fill="none"/></svg>
<svg class="a" style="left:889px;top:26px" width="7" height="10" viewBox="0 0 7 10"><path d="M1.5 0.5H5L3.5 3.5H6L1.5 9.5L2.5 5.5H0.8Z" fill="#f6e27a" stroke="#b89a30" stroke-width="0.6"/></svg>
<div class="a hw" style="left:900px;top:27px">Core VIDs</div>
<div class="v" style="left:1007.85px;top:26px;width:70px;color:#1e2630">1.282 V</div>
<div class="v" style="left:1069.05px;top:26px;width:70px;color:#1e2630">1.092 V</div>
<div class="v" style="left:1130.85px;top:26px;width:70px;color:#1e2630">1.416 V</div>
<div class="v" style="left:1192.85px;top:26px;width:70px;color:#1e2630">1.284 V</div>
<div class="a" style="left:886px;top:37px;width:381px;height:13px;background:#efefef"></div>
<svg class="a" style="left:878px;top:38px" width="7" height="10" viewBox="0 0 7 10"><path d="M1.5 0.5H5L3.5 3.5H6L1.5 9.5L2.5 5.5H0.8Z" fill="#f6e27a" stroke="#b89a30" stroke-width="0.6"/></svg>
<div class="a hw" style="left:888.5px;top:39px">Uncore VID</div>
<div class="v" style="left:1007.85px;top:38px;width:70px;color:#1e2630">1.326 V</div>
<div class="v" style="left:1069.05px;top:38px;width:70px;color:#1e2630">1.126 V</div>
<div class="v" style="left:1130.85px;top:38px;width:70px;color:#1e2630">1.384 V</div>
<div class="v" style="left:1192.85px;top:38px;width:70px;color:#1e2630">1.335 V</div>
<svg class="a" style="left:878px;top:51px" width="7" height="10" viewBox="0 0 7 10"><path d="M1.5 0.5H5L3.5 3.5H6L1.5 9.5L2.5 5.5H0.8Z" fill="#f6e27a" stroke="#b89a30" stroke-width="0.6"/></svg>
<div class="a hw" style="left:888.5px;top:52px">SA VID</div>
<div class="v" style="left:1007.85px;top:51px;width:70px;color:#1e2630">1.301 V</div>
<div class="v" style="left:1069.05px;top:51px;width:70px;color:#1e2630">1.301 V</div>
<div class="v" style="left:1130.85px;top:51px;width:70px;color:#1e2630">1.301 V</div>
<div class="v" style="left:1192.85px;top:51px;width:70px;color:#1e2630">1.301 V</div>
<div class="a" style="left:886px;top:62px;width:381px;height:12px;background:#efefef"></div>
<div class="a" style="left:1020px;top:62px;width:62px;height:12px;background:#cce3f8"></div>
<svg class="a" style="left:877px;top:66px" width="7" height="5" viewBox="0 0 7 5"><path d="M0.8 0.8L3.5 3.8L6.2 0.8" stroke="#333" stroke-width="1.1" fill="none"/></svg>
<svg class="a" style="left:889px;top:63.8px" width="9" height="9" viewBox="0 0 9 9"><circle cx="4.5" cy="4.5" r="3.7" fill="#f4f4f4" stroke="#555" stroke-width="0.9"/><path d="M2.8 4.6H6.2" stroke="#555" stroke-width="0.8"/></svg>
<div class="a hw" style="left:900px;top:64px">Core Clocks</div>
<div class="v" style="left:1007.85px;top:63px;width:70px;color:#1e2630">4,908.3 MHz</div>
<div class="v" style="left:1069.05px;top:63px;width:70px;color:#1e2630">4,000.0 MHz</div>
<div class="v" style="left:1130.85px;top:63px;width:70px;color:#1e2630">5,900.0 MHz</div>
<div class="v" style="left:1192.85px;top:63px;width:70px;color:#1e2630">4,901.4 MHz</div>
<div class="a" style="left:1020px;top:74px;width:62px;height:12px;background:#cce3f8"></div>
<svg class="a" style="left:889px;top:75.8px" width="9" height="9" viewBox="0 0 9 9"><circle cx="4.5" cy="4.5" r="3.7" fill="#f4f4f4" stroke="#555" stroke-width="0.9"/><path d="M2.8 4.6H6.2" stroke="#555" stroke-width="0.8"/></svg>
<div class="a hw" style="left:900px;top:76px">P-core 0 Clock</div>
<div class="v" style="left:1007.85px;top:75px;width:70px;color:#1e2630">5,700.0 MHz</div>
<div class="v" style="left:1069.05px;top:75px;width:70px;color:#1e2630">5,000.0 MHz</div>
<div class="v" style="left:1130.85px;top:75px;width:70px;color:#1e2630">5,900.0 MHz</div>
<div class="v" style="left:1192.85px;top:75px;width:70px;color:#1e2630">5,721.6 MHz</div>
<div class="a" style="left:886px;top:86px;width:381px;height:12px;background:#efefef"></div>
<div class="a" style="left:1020px;top:86px;width:62px;height:12px;background:#cce3f8"></div>
<svg class="a" style="left:889px;top:87.8px" width="9" height="9" viewBox="0 0 9 9"><circle cx="4.5" cy="4.5" r="3.7" fill="#f4f4f4" stroke="#555" stroke-width="0.9"/><path d="M2.8 4.6H6.2" stroke="#555" stroke-width="0.8"/></svg>
<div class="a hw" style="left:900px;top:88px">P-core 1 Clock</div>
<div class="v" style="left:1007.85px;top:87px;width:70px;color:#1e2630">5,800.0 MHz</div>
<div class="v" style="left:1069.05px;top:87px;width:70px;color:#1e2630">5,000.0 MHz</div>
<div class="v" style="left:1130.85px;top:87px;width:70px;color:#1e2630">5,900.0 MHz</div>
<div class="v" style="left:1192.85px;top:87px;width:70px;color:#1e2630">5,721.0 MHz</div>
<div class="a" style="left:1020px;top:98px;width:62px;height:12px;background:#cce3f8"></div>
<svg class="a" style="left:889px;top:99.8px" width="9" height="9" viewBox="0 0 9 9"><circle cx="4.5" cy="4.5" r="3.7" fill="#f4f4f4" stroke="#555" stroke-width="0.9"/><path d="M2.8 4.6H6.2" stroke="#555" stroke-width="0.8"/></svg>
<div class="a hw" style="left:900px;top:100px">P-core 2 Clock</div>
<div class="v" style="left:1007.85px;top:99px;width:70px;color:#1e2630">5,800.0 MHz</div>
<div class="v" style="left:1069.05px;top:99px;width:70px;color:#1e2630">5,000.0 MHz</div>
<div class="v" style="left:1130.85px;top:99px;width:70px;color:#1e2630">5,900.0 MHz</div>
<div class="v" style="left:1192.85px;top:99px;width:70px;color:#1e2630">5,719.2 MHz</div>
<div class="a" style="left:886px;top:110px;width:381px;height:13px;background:#efefef"></div>
<div class="a" style="left:1020px;top:110px;width:62px;height:13px;background:#cce3f8"></div>
<svg class="a" style="left:889px;top:111.8px" width="9" height="9" viewBox="0 0 9 9"><circle cx="4.5" cy="4.5" r="3.7" fill="#f4f4f4" stroke="#555" stroke-width="0.9"/><path d="M2.8 4.6H6.2" stroke="#555" stroke-width="0.8"/></svg>
<div class="a hw" style="left:900px;top:112px">P-core 3 Clock</div>
<div class="v" style="left:1007.85px;top:111px;width:70px;color:#1e2630">5,700.0 MHz</div>
<div class="v" style="left:1069.05px;top:111px;width:70px;color:#1e2630">5,000.0 MHz</div>
<div class="v" style="left:1130.85px;top:111px;width:70px;color:#1e2630">5,900.0 MHz</div>
<div class="v" style="left:1192.85px;top:111px;width:70px;color:#1e2630">5,721.6 MHz</div>
<div class="a" style="left:1020px;top:123px;width:62px;height:12px;background:#cce3f8"></div>
<svg class="a" style="left:889px;top:124.8px" width="9" height="9" viewBox="0 0 9 9"><circle cx="4.5" cy="4.5" r="3.7" fill="#f4f4f4" stroke="#555" stroke-width="0.9"/><path d="M2.8 4.6H6.2" stroke="#555" stroke-width="0.8"/></svg>
<div class="a hw" style="left:900px;top:125px">P-core 4 Clock</div>
<div class="v" style="left:1007.85px;top:124px;width:70px;color:#1e2630">5,700.0 MHz</div>
<div class="v" style="left:1069.05px;top:124px;width:70px;color:#1e2630">5,000.0 MHz</div>
<div class="v" style="left:1130.85px;top:124px;width:70px;color:#1e2630">5,900.0 MHz</div>
<div class="v" style="left:1192.85px;top:124px;width:70px;color:#1e2630">5,723.4 MHz</div>
<div class="a" style="left:886px;top:135px;width:381px;height:12px;background:#efefef"></div>
<div class="a" style="left:1020px;top:135px;width:62px;height:12px;background:#cce3f8"></div>
<svg class="a" style="left:889px;top:136.8px" width="9" height="9" viewBox="0 0 9 9"><circle cx="4.5" cy="4.5" r="3.7" fill="#f4f4f4" stroke="#555" stroke-width="0.9"/><path d="M2.8 4.6H6.2" stroke="#555" stroke-width="0.8"/></svg>
<div class="a hw" style="left:900px;top:137px">P-core 5 Clock</div>
<div class="v" style="left:1007.85px;top:136px;width:70px;color:#1e2630">5,700.0 MHz</div>
<div class="v" style="left:1069.05px;top:136px;width:70px;color:#1e2630">5,000.0 MHz</div>
<div class="v" style="left:1130.85px;top:136px;width:70px;color:#1e2630">5,900.0 MHz</div>
<div class="v" style="left:1192.85px;top:136px;width:70px;color:#1e2630">5,720.8 MHz</div>
<div class="a" style="left:1020px;top:147px;width:62px;height:12px;background:#cce3f8"></div>
<svg class="a" style="left:889px;top:148.8px" width="9" height="9" viewBox="0 0 9 9"><circle cx="4.5" cy="4.5" r="3.7" fill="#f4f4f4" stroke="#555" stroke-width="0.9"/><path d="M2.8 4.6H6.2" stroke="#555" stroke-width="0.8"/></svg>
<div class="a hw" style="left:900px;top:149px">P-core 6 Clock</div>
<div class="v" style="left:1007.85px;top:148px;width:70px;color:#1e2630">5,700.0 MHz</div>
<div class="v" style="left:1069.05px;top:148px;width:70px;color:#1e2630">5,000.0 MHz</div>
<div class="v" style="left:1130.85px;top:148px;width:70px;color:#1e2630">5,900.0 MHz</div>
<div class="v" style="left:1192.85px;top:148px;width:70px;color:#1e2630">5,719.4 MHz</div>
<div class="a" style="left:886px;top:159px;width:381px;height:12px;background:#efefef"></div>
<div class="a" style="left:1020px;top:159px;width:62px;height:12px;background:#cce3f8"></div>
<svg class="a" style="left:889px;top:160.8px" width="9" height="9" viewBox="0 0 9 9"><circle cx="4.5" cy="4.5" r="3.7" fill="#f4f4f4" stroke="#555" stroke-width="0.9"/><path d="M2.8 4.6H6.2" stroke="#555" stroke-width="0.8"/></svg>
<div class="a hw" style="left:900px;top:161px">P-core 7 Clock</div>
<div class="v" style="left:1007.85px;top:160px;width:70px;color:#1e2630">5,700.0 MHz</div>
<div class="v" style="left:1069.05px;top:160px;width:70px;color:#1e2630">5,000.0 MHz</div>
<div class="v" style="left:1130.85px;top:160px;width:70px;color:#1e2630">5,900.0 MHz</div>
<div class="v" style="left:1192.85px;top:160px;width:70px;color:#1e2630">5,716.8 MHz</div>
<div class="a" style="left:1020px;top:171px;width:62px;height:12px;background:#cce3f8"></div>
<svg class="a" style="left:889px;top:172.8px" width="9" height="9" viewBox="0 0 9 9"><circle cx="4.5" cy="4.5" r="3.7" fill="#f4f4f4" stroke="#555" stroke-width="0.9"/><path d="M2.8 4.6H6.2" stroke="#555" stroke-width="0.8"/></svg>
<div class="a hw" style="left:900px;top:173px">E-core 8 Clock</div>
<div class="v" style="left:1007.85px;top:172px;width:70px;color:#1e2630">4,500.0 MHz</div>
<div class="v" style="left:1069.05px;top:172px;width:70px;color:#1e2630">4,000.0 MHz</div>
<div class="v" style="left:1130.85px;top:172px;width:70px;color:#1e2630">4,500.0 MHz</div>
<div class="v" style="left:1192.85px;top:172px;width:70px;color:#1e2630">4,490.1 MHz</div>
<div class="a" style="left:886px;top:183px;width:381px;height:13px;background:#efefef"></div>
<div class="a" style="left:1020px;top:183px;width:62px;height:13px;background:#cce3f8"></div>
<svg class="a" style="left:889px;top:184.8px" width="9" height="9" viewBox="0 0 9 9"><circle cx="4.5" cy="4.5" r="3.7" fill="#f4f4f4" stroke="#555" stroke-width="0.9"/><path d="M2.8 4.6H6.2" stroke="#555" stroke-width="0.8"/></svg>
<div class="a hw" style="left:900px;top:185px">E-core 9 Clock</div>
<div class="v" style="left:1007.85px;top:184px;width:70px;color:#1e2630">4,500.0 MHz</div>
<div class="v" style="left:1069.05px;top:184px;width:70px;color:#1e2630">4,000.0 MHz</div>
<div class="v" style="left:1130.85px;top:184px;width:70px;color:#1e2630">4,500.0 MHz</div>
<div class="v" style="left:1192.85px;top:184px;width:70px;color:#1e2630">4,490.1 MHz</div>
<div class="a" style="left:1020px;top:196px;width:62px;height:12px;background:#cce3f8"></div>
<svg class="a" style="left:889px;top:197.8px" width="9" height="9" viewBox="0 0 9 9"><circle cx="4.5" cy="4.5" r="3.7" fill="#f4f4f4" stroke="#555" stroke-width="0.9"/><path d="M2.8 4.6H6.2" stroke="#555" stroke-width="0.8"/></svg>
<div class="a hw" style="left:900px;top:198px">E-core 10 Clock</div>
<div class="v" style="left:1007.85px;top:197px;width:70px;color:#1e2630">4,500.0 MHz</div>
<div class="v" style="left:1069.05px;top:197px;width:70px;color:#1e2630">4,000.0 MHz</div>
<div class="v" style="left:1130.85px;top:197px;width:70px;color:#1e2630">4,500.0 MHz</div>
<div class="v" style="left:1192.85px;top:197px;width:70px;color:#1e2630">4,490.9 MHz</div>
<div class="a" style="left:886px;top:208px;width:381px;height:12px;background:#efefef"></div>
<div class="a" style="left:1020px;top:208px;width:62px;height:12px;background:#cce3f8"></div>
<svg class="a" style="left:889px;top:209.8px" width="9" height="9" viewBox="0 0 9 9"><circle cx="4.5" cy="4.5" r="3.7" fill="#f4f4f4" stroke="#555" stroke-width="0.9"/><path d="M2.8 4.6H6.2" stroke="#555" stroke-width="0.8"/></svg>
<div class="a hw" style="left:900px;top:210px">E-core 11 Clock</div>
<div class="v" style="left:1007.85px;top:209px;width:70px;color:#1e2630">4,500.0 MHz</div>
<div class="v" style="left:1069.05px;top:209px;width:70px;color:#1e2630">4,000.0 MHz</div>
<div class="v" style="left:1130.85px;top:209px;width:70px;color:#1e2630">4,500.0 MHz</div>
<div class="v" style="left:1192.85px;top:209px;width:70px;color:#1e2630">4,490.5 MHz</div>
<div class="a" style="left:1020px;top:220px;width:62px;height:12px;background:#cce3f8"></div>
<svg class="a" style="left:889px;top:221.8px" width="9" height="9" viewBox="0 0 9 9"><circle cx="4.5" cy="4.5" r="3.7" fill="#f4f4f4" stroke="#555" stroke-width="0.9"/><path d="M2.8 4.6H6.2" stroke="#555" stroke-width="0.8"/></svg>
<div class="a hw" style="left:900px;top:222px">E-core 12 Clock</div>
<div class="v" style="left:1007.85px;top:221px;width:70px;color:#1e2630">4,500.0 MHz</div>
<div class="v" style="left:1069.05px;top:221px;width:70px;color:#1e2630">4,000.0 MHz</div>
<div class="v" style="left:1130.85px;top:221px;width:70px;color:#1e2630">4,500.0 MHz</div>
<div class="v" style="left:1192.85px;top:221px;width:70px;color:#1e2630">4,490.9 MHz</div>
<div class="a" style="left:886px;top:232px;width:381px;height:12px;background:#efefef"></div>
<div class="a" style="left:1020px;top:232px;width:62px;height:12px;background:#cce3f8"></div>
<svg class="a" style="left:889px;top:233.8px" width="9" height="9" viewBox="0 0 9 9"><circle cx="4.5" cy="4.5" r="3.7" fill="#f4f4f4" stroke="#555" stroke-width="0.9"/><path d="M2.8 4.6H6.2" stroke="#555" stroke-width="0.8"/></svg>
<div class="a hw" style="left:900px;top:234px">E-core 13 Clock</div>
<div class="v" style="left:1007.85px;top:233px;width:70px;color:#1e2630">4,500.0 MHz</div>
<div class="v" style="left:1069.05px;top:233px;width:70px;color:#1e2630">4,000.0 MHz</div>
<div class="v" style="left:1130.85px;top:233px;width:70px;color:#1e2630">4,500.0 MHz</div>
<div class="v" style="left:1192.85px;top:233px;width:70px;color:#1e2630">4,490.9 MHz</div>
<div class="a" style="left:1020px;top:244px;width:62px;height:12px;background:#cce3f8"></div>
<svg class="a" style="left:889px;top:245.8px" width="9" height="9" viewBox="0 0 9 9"><circle cx="4.5" cy="4.5" r="3.7" fill="#f4f4f4" stroke="#555" stroke-width="0.9"/><path d="M2.8 4.6H6.2" stroke="#555" stroke-width="0.8"/></svg>
<div class="a hw" style="left:900px;top:246px">E-core 14 Clock</div>
<div class="v" style="left:1007.85px;top:245px;width:70px;color:#1e2630">4,500.0 MHz</div>
<div class="v" style="left:1069.05px;top:245px;width:70px;color:#1e2630">4,000.0 MHz</div>
<div class="v" style="left:1130.85px;top:245px;width:70px;color:#1e2630">4,500.0 MHz</div>
<div class="v" style="left:1192.85px;top:245px;width:70px;color:#1e2630">4,490.3 MHz</div>
<div class="a" style="left:886px;top:256px;width:381px;height:13px;background:#efefef"></div>
<div class="a" style="left:1020px;top:256px;width:62px;height:13px;background:#cce3f8"></div>
<svg class="a" style="left:889px;top:257.8px" width="9" height="9" viewBox="0 0 9 9"><circle cx="4.5" cy="4.5" r="3.7" fill="#f4f4f4" stroke="#555" stroke-width="0.9"/><path d="M2.8 4.6H6.2" stroke="#555" stroke-width="0.8"/></svg>
<div class="a hw" style="left:900px;top:258px">E-core 15 Clock</div>
<div class="v" style="left:1007.85px;top:257px;width:70px;color:#1e2630">4,500.0 MHz</div>
<div class="v" style="left:1069.05px;top:257px;width:70px;color:#1e2630">4,000.0 MHz</div>
<div class="v" style="left:1130.85px;top:257px;width:70px;color:#1e2630">4,500.0 MHz</div>
<div class="v" style="left:1192.85px;top:257px;width:70px;color:#1e2630">4,490.7 MHz</div>
<div class="a" style="left:1020px;top:269px;width:62px;height:12px;background:#cce3f8"></div>
<svg class="a" style="left:889px;top:270.8px" width="9" height="9" viewBox="0 0 9 9"><circle cx="4.5" cy="4.5" r="3.7" fill="#f4f4f4" stroke="#555" stroke-width="0.9"/><path d="M2.8 4.6H6.2" stroke="#555" stroke-width="0.8"/></svg>
<div class="a hw" style="left:900px;top:271px">E-core 16 Clock</div>
<div class="v" style="left:1007.85px;top:270px;width:70px;color:#1e2630">4,500.0 MHz</div>
<div class="v" style="left:1069.05px;top:270px;width:70px;color:#1e2630">4,000.0 MHz</div>
<div class="v" style="left:1130.85px;top:270px;width:70px;color:#1e2630">4,500.0 MHz</div>
<div class="v" style="left:1192.85px;top:270px;width:70px;color:#1e2630">4,494.0 MHz</div>
<div class="a" style="left:886px;top:281px;width:381px;height:12px;background:#efefef"></div>
<div class="a" style="left:1020px;top:281px;width:62px;height:12px;background:#cce3f8"></div>
<svg class="a" style="left:889px;top:282.8px" width="9" height="9" viewBox="0 0 9 9"><circle cx="4.5" cy="4.5" r="3.7" fill="#f4f4f4" stroke="#555" stroke-width="0.9"/><path d="M2.8 4.6H6.2" stroke="#555" stroke-width="0.8"/></svg>
<div class="a hw" style="left:900px;top:283px">E-core 17 Clock</div>
<div class="v" style="left:1007.85px;top:282px;width:70px;color:#1e2630">4,500.0 MHz</div>
<div class="v" style="left:1069.05px;top:282px;width:70px;color:#1e2630">4,000.0 MHz</div>
<div class="v" style="left:1130.85px;top:282px;width:70px;color:#1e2630">4,500.0 MHz</div>
<div class="v" style="left:1192.85px;top:282px;width:70px;color:#1e2630">4,494.0 MHz</div>
<div class="a" style="left:1020px;top:293px;width:62px;height:12px;background:#cce3f8"></div>
<svg class="a" style="left:889px;top:294.8px" width="9" height="9" viewBox="0 0 9 9"><circle cx="4.5" cy="4.5" r="3.7" fill="#f4f4f4" stroke="#555" stroke-width="0.9"/><path d="M2.8 4.6H6.2" stroke="#555" stroke-width="0.8"/></svg>
<div class="a hw" style="left:900px;top:295px">E-core 18 Clock</div>
<div class="v" style="left:1007.85px;top:294px;width:70px;color:#1e2630">4,500.0 MHz</div>
<div class="v" style="left:1069.05px;top:294px;width:70px;color:#1e2630">4,000.0 MHz</div>
<div class="v" style="left:1130.85px;top:294px;width:70px;color:#1e2630">4,500.0 MHz</div>
<div class="v" style="left:1192.85px;top:294px;width:70px;color:#1e2630">4,494.7 MHz</div>
<div class="a" style="left:886px;top:305px;width:381px;height:12px;background:#efefef"></div>
<div class="a" style="left:1020px;top:305px;width:62px;height:12px;background:#cce3f8"></div>
<svg class="a" style="left:889px;top:306.8px" width="9" height="9" viewBox="0 0 9 9"><circle cx="4.5" cy="4.5" r="3.7" fill="#f4f4f4" stroke="#555" stroke-width="0.9"/><path d="M2.8 4.6H6.2" stroke="#555" stroke-width="0.8"/></svg>
<div class="a hw" style="left:900px;top:307px">E-core 19 Clock</div>
<div class="v" style="left:1007.85px;top:306px;width:70px;color:#1e2630">4,500.0 MHz</div>
<div class="v" style="left:1069.05px;top:306px;width:70px;color:#1e2630">4,000.0 MHz</div>
<div class="v" style="left:1130.85px;top:306px;width:70px;color:#1e2630">4,500.0 MHz</div>
<div class="v" style="left:1192.85px;top:306px;width:70px;color:#1e2630">4,494.0 MHz</div>
<div class="a" style="left:1020px;top:317px;width:62px;height:13px;background:#cce3f8"></div>
<svg class="a" style="left:889px;top:318.8px" width="9" height="9" viewBox="0 0 9 9"><circle cx="4.5" cy="4.5" r="3.7" fill="#f4f4f4" stroke="#555" stroke-width="0.9"/><path d="M2.8 4.6H6.2" stroke="#555" stroke-width="0.8"/></svg>
<div class="a hw" style="left:900px;top:319px">E-core 20 Clock</div>
<div class="v" style="left:1007.85px;top:318px;width:70px;color:#1e2630">4,500.0 MHz</div>
<div class="v" style="left:1069.05px;top:318px;width:70px;color:#1e2630">4,000.0 MHz</div>
<div class="v" style="left:1130.85px;top:318px;width:70px;color:#1e2630">4,500.0 MHz</div>
<div class="v" style="left:1192.85px;top:318px;width:70px;color:#1e2630">4,492.1 MHz</div>
<div class="a" style="left:886px;top:330px;width:381px;height:12px;background:#efefef"></div>
<div class="a" style="left:1020px;top:330px;width:62px;height:12px;background:#cce3f8"></div>
<svg class="a" style="left:889px;top:331.8px" width="9" height="9" viewBox="0 0 9 9"><circle cx="4.5" cy="4.5" r="3.7" fill="#f4f4f4" stroke="#555" stroke-width="0.9"/><path d="M2.8 4.6H6.2" stroke="#555" stroke-width="0.8"/></svg>
<div class="a hw" style="left:900px;top:332px">E-core 21 Clock</div>
<div class="v" style="left:1007.85px;top:331px;width:70px;color:#1e2630">4,500.0 MHz</div>
<div class="v" style="left:1069.05px;top:331px;width:70px;color:#1e2630">4,000.0 MHz</div>
<div class="v" style="left:1130.85px;top:331px;width:70px;color:#1e2630">4,500.0 MHz</div>
<div class="v" style="left:1192.85px;top:331px;width:70px;color:#1e2630">4,492.3 MHz</div>
<div class="a" style="left:1020px;top:342px;width:62px;height:12px;background:#cce3f8"></div>
<svg class="a" style="left:889px;top:343.8px" width="9" height="9" viewBox="0 0 9 9"><circle cx="4.5" cy="4.5" r="3.7" fill="#f4f4f4" stroke="#555" stroke-width="0.9"/><path d="M2.8 4.6H6.2" stroke="#555" stroke-width="0.8"/></svg>
<div class="a hw" style="left:900px;top:344px">E-core 22 Clock</div>
<div class="v" style="left:1007.85px;top:343px;width:70px;color:#1e2630">4,500.0 MHz</div>
<div class="v" style="left:1069.05px;top:343px;width:70px;color:#1e2630">4,000.0 MHz</div>
<div class="v" style="left:1130.85px;top:343px;width:70px;color:#1e2630">4,500.0 MHz</div>
<div class="v" style="left:1192.85px;top:343px;width:70px;color:#1e2630">4,492.5 MHz</div>
<div class="a" style="left:886px;top:354px;width:381px;height:12px;background:#efefef"></div>
<div class="a" style="left:1020px;top:354px;width:62px;height:12px;background:#cce3f8"></div>
<svg class="a" style="left:889px;top:355.8px" width="9" height="9" viewBox="0 0 9 9"><circle cx="4.5" cy="4.5" r="3.7" fill="#f4f4f4" stroke="#555" stroke-width="0.9"/><path d="M2.8 4.6H6.2" stroke="#555" stroke-width="0.8"/></svg>
<div class="a hw" style="left:900px;top:356px">E-core 23 Clock</div>
<div class="v" style="left:1007.85px;top:355px;width:70px;color:#1e2630">4,500.0 MHz</div>
<div class="v" style="left:1069.05px;top:355px;width:70px;color:#1e2630">4,000.0 MHz</div>
<div class="v" style="left:1130.85px;top:355px;width:70px;color:#1e2630">4,500.0 MHz</div>
<div class="v" style="left:1192.85px;top:355px;width:70px;color:#1e2630">4,492.3 MHz</div>
<svg class="a" style="left:878px;top:367.8px" width="9" height="9" viewBox="0 0 9 9"><circle cx="4.5" cy="4.5" r="3.7" fill="#f4f4f4" stroke="#555" stroke-width="0.9"/><path d="M2.8 4.6H6.2" stroke="#555" stroke-width="0.8"/></svg>
<div class="a hw" style="left:888.5px;top:368px">Bus Clock</div>
<div class="v" style="left:1007.85px;top:367px;width:70px;color:#1e2630">100.0 MHz</div>
<div class="v" style="left:1069.05px;top:367px;width:70px;color:#1e2630">100.0 MHz</div>
<div class="v" style="left:1130.85px;top:367px;width:70px;color:#1e2630">100.0 MHz</div>
<div class="v" style="left:1192.85px;top:367px;width:70px;color:#1e2630">100.0 MHz</div>
<div class="a" style="left:886px;top:378px;width:381px;height:12px;background:#efefef"></div>
<div class="a" style="left:1020px;top:378px;width:62px;height:12px;background:#cce3f8"></div>
<svg class="a" style="left:878px;top:379.8px" width="9" height="9" viewBox="0 0 9 9"><circle cx="4.5" cy="4.5" r="3.7" fill="#f4f4f4" stroke="#555" stroke-width="0.9"/><path d="M2.8 4.6H6.2" stroke="#555" stroke-width="0.8"/></svg>
<div class="a hw" style="left:888.5px;top:380px">Ring/LLC Clock</div>
<div class="v" style="left:1007.85px;top:379px;width:70px;color:#1e2630">4,500.0 MHz</div>
<div class="v" style="left:1069.05px;top:379px;width:70px;color:#1e2630">4,400.0 MHz</div>
<div class="v" style="left:1130.85px;top:379px;width:70px;color:#1e2630">4,600.0 MHz</div>
<div class="v" style="left:1192.85px;top:379px;width:70px;color:#1e2630">4,500.2 MHz</div>
<div class="a" style="left:1020px;top:390px;width:62px;height:13px;background:#cce3f8"></div>
<svg class="a" style="left:878px;top:393px" width="5" height="7" viewBox="0 0 5 7"><path d="M0.8 0.8L3.8 3.5L0.8 6.2" stroke="#333" stroke-width="1.1" fill="none"/></svg>
<svg class="a" style="left:889px;top:391.8px" width="9" height="9" viewBox="0 0 9 9"><circle cx="4.5" cy="4.5" r="3.7" fill="#f4f4f4" stroke="#555" stroke-width="0.9"/><path d="M2.8 4.6H6.2" stroke="#555" stroke-width="0.8"/></svg>
<div class="a hw" style="left:900px;top:392px">Core Effective Clocks</div>
<div class="v" style="left:1007.85px;top:391px;width:70px;color:#1e2630">5,083.3 MHz</div>
<div class="v" style="left:1069.05px;top:391px;width:70px;color:#1e2630">3.8 MHz</div>
<div class="v" style="left:1130.85px;top:391px;width:70px;color:#1e2630">5,797.5 MHz</div>
<div class="v" style="left:1192.85px;top:391px;width:70px;color:#1e2630">5,031.9 MHz</div>
<div class="a" style="left:886px;top:403px;width:381px;height:12px;background:#efefef"></div>
<div class="a" style="left:1020px;top:403px;width:62px;height:12px;background:#cce3f8"></div>
<svg class="a" style="left:878px;top:404.8px" width="9" height="9" viewBox="0 0 9 9"><circle cx="4.5" cy="4.5" r="3.7" fill="#f4f4f4" stroke="#555" stroke-width="0.9"/><path d="M2.8 4.6H6.2" stroke="#555" stroke-width="0.8"/></svg>
<div class="a hw" style="left:888.5px;top:405px">Average Effective Clock</div>
<div class="v" style="left:1007.85px;top:404px;width:70px;color:#1e2630">5,284.6 MHz</div>
<div class="v" style="left:1069.05px;top:404px;width:70px;color:#1e2630">105.1 MHz</div>
<div class="v" style="left:1130.85px;top:404px;width:70px;color:#1e2630">5,364.6 MHz</div>
<div class="v" style="left:1192.85px;top:404px;width:70px;color:#1e2630">5,230.9 MHz</div>
<svg class="a" style="left:878px;top:418px" width="5" height="7" viewBox="0 0 5 7"><path d="M0.8 0.8L3.8 3.5L0.8 6.2" stroke="#333" stroke-width="1.1" fill="none"/></svg>
<svg class="a" style="left:889px;top:416.8px" width="9" height="9" viewBox="0 0 9 9"><circle cx="4.5" cy="4.5" r="3.7" fill="#f4f4f4" stroke="#555" stroke-width="0.9"/><path d="M2.8 4.6H6.2" stroke="#555" stroke-width="0.8"/></svg>
<div class="a hw" style="left:900px;top:417px">Core Usage</div>
<div class="v" style="left:1007.85px;top:416px;width:70px;color:#1e2630">100.0 %</div>
<div class="v" style="left:1069.05px;top:416px;width:70px;color:#1e2630">0.0 %</div>
<div class="v" style="left:1130.85px;top:416px;width:70px;color:#1e2630">100.0 %</div>
<div class="v" style="left:1192.85px;top:416px;width:70px;color:#1e2630">99.1 %</div>
<div class="a" style="left:886px;top:427px;width:381px;height:12px;background:#efefef"></div>
<svg class="a" style="left:878px;top:428.8px" width="9" height="9" viewBox="0 0 9 9"><circle cx="4.5" cy="4.5" r="3.7" fill="#f4f4f4" stroke="#555" stroke-width="0.9"/><path d="M2.8 4.6H6.2" stroke="#555" stroke-width="0.8"/></svg>
<div class="a hw" style="left:888.5px;top:429px">Max CPU/Thread Usage</div>
<div class="v" style="left:1007.85px;top:428px;width:70px;color:#1e2630">100.0 %</div>
<div class="v" style="left:1069.05px;top:428px;width:70px;color:#1e2630">12.3 %</div>
<div class="v" style="left:1130.85px;top:428px;width:70px;color:#1e2630">100.0 %</div>
<div class="v" style="left:1192.85px;top:428px;width:70px;color:#1e2630">99.3 %</div>
<svg class="a" style="left:878px;top:440.8px" width="9" height="9" viewBox="0 0 9 9"><circle cx="4.5" cy="4.5" r="3.7" fill="#f4f4f4" stroke="#555" stroke-width="0.9"/><path d="M2.8 4.6H6.2" stroke="#555" stroke-width="0.8"/></svg>
<div class="a hw" style="left:888.5px;top:441px">Total CPU Usage</div>
<div class="v" style="left:1007.85px;top:440px;width:70px;color:#1e2630">100.0 %</div>
<div class="v" style="left:1069.05px;top:440px;width:70px;color:#1e2630">1.3 %</div>
<div class="v" style="left:1130.85px;top:440px;width:70px;color:#1e2630">100.0 %</div>
<div class="v" style="left:1192.85px;top:440px;width:70px;color:#1e2630">99.1 %</div>
<div class="a" style="left:886px;top:451px;width:381px;height:12px;background:#efefef"></div>
<svg class="a" style="left:878px;top:452.8px" width="9" height="9" viewBox="0 0 9 9"><circle cx="4.5" cy="4.5" r="3.7" fill="#f4f4f4" stroke="#555" stroke-width="0.9"/><path d="M2.8 4.6H6.2" stroke="#555" stroke-width="0.8"/></svg>
<div class="a hw" style="left:888.5px;top:453px">On-Demand Clock Modulation</div>
<div class="v" style="left:1007.85px;top:452px;width:70px;color:#1e2630">100.0 %</div>
<div class="v" style="left:1069.05px;top:452px;width:70px;color:#1e2630">100.0 %</div>
<div class="v" style="left:1130.85px;top:452px;width:70px;color:#1e2630">100.0 %</div>
<div class="v" style="left:1192.85px;top:452px;width:70px;color:#1e2630">100.0 %</div>
<div class="a" style="left:1020px;top:463px;width:62px;height:13px;background:#cce3f8"></div>
<svg class="a" style="left:878px;top:466px" width="5" height="7" viewBox="0 0 5 7"><path d="M0.8 0.8L3.8 3.5L0.8 6.2" stroke="#333" stroke-width="1.1" fill="none"/></svg>
<svg class="a" style="left:889px;top:464.8px" width="9" height="9" viewBox="0 0 9 9"><circle cx="4.5" cy="4.5" r="3.7" fill="#f4f4f4" stroke="#555" stroke-width="0.9"/><path d="M2.8 4.6H6.2" stroke="#555" stroke-width="0.8"/></svg>
<div class="a hw" style="left:900px;top:465px">Core Utility</div>
<div class="v" style="left:1007.85px;top:464px;width:70px;color:#1e2630">159.1 %</div>
<div class="v" style="left:1069.05px;top:464px;width:70px;color:#1e2630">0.1 %</div>
<div class="v" style="left:1130.85px;top:464px;width:70px;color:#1e2630">180.7 %</div>
<div class="v" style="left:1192.85px;top:464px;width:70px;color:#1e2630">157.6 %</div>
<div class="a" style="left:886px;top:476px;width:381px;height:12px;background:#efefef"></div>
<svg class="a" style="left:878px;top:477.8px" width="9" height="9" viewBox="0 0 9 9"><circle cx="4.5" cy="4.5" r="3.7" fill="#f4f4f4" stroke="#555" stroke-width="0.9"/><path d="M2.8 4.6H6.2" stroke="#555" stroke-width="0.8"/></svg>
<div class="a hw" style="left:888.5px;top:478px">Total CPU Utility</div>
<div class="v" style="left:1007.85px;top:477px;width:70px;color:#1e2630">159.2 %</div>
<div class="v" style="left:1069.05px;top:477px;width:70px;color:#1e2630">2.4 %</div>
<div class="v" style="left:1130.85px;top:477px;width:70px;color:#1e2630">160.3 %</div>
<div class="v" style="left:1192.85px;top:477px;width:70px;color:#1e2630">157.6 %</div>
<svg class="a" style="left:878px;top:491px" width="5" height="7" viewBox="0 0 5 7"><path d="M0.8 0.8L3.8 3.5L0.8 6.2" stroke="#333" stroke-width="1.1" fill="none"/></svg>
<svg class="a" style="left:889px;top:489.8px" width="9" height="9" viewBox="0 0 9 9"><circle cx="4.5" cy="4.5" r="3.7" fill="#f4f4f4" stroke="#555" stroke-width="0.9"/><path d="M2.8 4.6H6.2" stroke="#555" stroke-width="0.8"/></svg>
<div class="a hw" style="left:900px;top:490px">Core Ratios</div>
<div class="v" style="left:1007.85px;top:489px;width:70px;color:#1e2630">49.1 x</div>
<div class="v" style="left:1069.05px;top:489px;width:70px;color:#1e2630">40.0 x</div>
<div class="v" style="left:1130.85px;top:489px;width:70px;color:#1e2630">59.0 x</div>
<div class="v" style="left:1192.85px;top:489px;width:70px;color:#1e2630">49.0 x</div>
<div class="a" style="left:886px;top:500px;width:381px;height:12px;background:#efefef"></div>
<svg class="a" style="left:878px;top:501.8px" width="9" height="9" viewBox="0 0 9 9"><circle cx="4.5" cy="4.5" r="3.7" fill="#f4f4f4" stroke="#555" stroke-width="0.9"/><path d="M2.8 4.6H6.2" stroke="#555" stroke-width="0.8"/></svg>
<div class="a hw" style="left:888.5px;top:502px">Uncore Ratio</div>
<div class="v" style="left:1007.85px;top:501px;width:70px;color:#1e2630">45.0 x</div>
<div class="v" style="left:1069.05px;top:501px;width:70px;color:#1e2630">44.0 x</div>
<div class="v" style="left:1130.85px;top:501px;width:70px;color:#1e2630">46.0 x</div>
<div class="v" style="left:1192.85px;top:501px;width:70px;color:#1e2630">45.0 x</div>
<div class="a" style="left:886px;top:524px;width:381px;height:11px;background:#dcdcdc"></div>
<svg class="a" style="left:865px;top:527px" width="7" height="5" viewBox="0 0 7 5"><path d="M0.8 0.8L3.5 3.8L6.2 0.8" stroke="#333" stroke-width="1.1" fill="none"/></svg>
<div class="a" style="left:878.5px;top:525px;width:6px;height:9.5px;background:#3a3a3a;border-radius:1px"></div>
<div class="a hw" style="left:889px;top:525px;font-style:italic;font-size:8px;letter-spacing:-0.12px;color:#333">CPU [#0]: Intel Core i9-14900KS: DTS</div>
<svg class="a" style="left:878px;top:539px" width="5" height="7" viewBox="0 0 5 7"><path d="M0.8 0.8L3.8 3.5L0.8 6.2" stroke="#333" stroke-width="1.1" fill="none"/></svg>
<svg class="a" style="left:889px;top:537px" width="7" height="10" viewBox="0 0 7 10"><rect x="2.2" y="0.5" width="2.6" height="6.5" rx="1.3" fill="#e8e0d0" stroke="#8a8070" stroke-width="0.6"/><circle cx="3.5" cy="7.6" r="1.9" fill="#c8b8a0" stroke="#8a8070" stroke-width="0.6"/></svg>
<div class="a hw" style="left:900px;top:538px">Core Temperatures</div>
<div class="v" style="left:1007.85px;top:537px;width:70px;color:#1e2630">86 °C</div>
<div class="v" style="left:1069.05px;top:537px;width:70px;color:#1e2630">26 °C</div>
<div class="v" style="left:1130.85px;top:537px;width:70px;color:#c43232">100 °C</div>
<div class="v" style="left:1192.85px;top:537px;width:70px;color:#1e2630">86 °C</div>
<div class="a" style="left:886px;top:549px;width:381px;height:12px;background:#efefef"></div>
<svg class="a" style="left:878px;top:552px" width="5" height="7" viewBox="0 0 5 7"><path d="M0.8 0.8L3.8 3.5L0.8 6.2" stroke="#333" stroke-width="1.1" fill="none"/></svg>
<svg class="a" style="left:889px;top:550px" width="7" height="10" viewBox="0 0 7 10"><rect x="2.2" y="0.5" width="2.6" height="6.5" rx="1.3" fill="#e8e0d0" stroke="#8a8070" stroke-width="0.6"/><circle cx="3.5" cy="7.6" r="1.9" fill="#c8b8a0" stroke="#8a8070" stroke-width="0.6"/></svg>
<div class="a hw" style="left:900px;top:551px">Core Distance to TjMAX</div>
<div class="v" style="left:1007.85px;top:550px;width:70px;color:#1e2630">14 °C</div>
<div class="v" style="left:1069.05px;top:550px;width:70px;color:#c43232">0 °C</div>
<div class="v" style="left:1130.85px;top:550px;width:70px;color:#1e2630">74 °C</div>
<div class="v" style="left:1192.85px;top:550px;width:70px;color:#1e2630">14 °C</div>
<svg class="a" style="left:878px;top:562px" width="7" height="10" viewBox="0 0 7 10"><rect x="2.2" y="0.5" width="2.6" height="6.5" rx="1.3" fill="#e8e0d0" stroke="#8a8070" stroke-width="0.6"/><circle cx="3.5" cy="7.6" r="1.9" fill="#c8b8a0" stroke="#8a8070" stroke-width="0.6"/></svg>
<div class="a hw" style="left:888.5px;top:563px">CPU Package</div>
<div class="v" style="left:1007.85px;top:562px;width:70px;color:#c43232">99 °C</div>
<div class="v" style="left:1069.05px;top:562px;width:70px;color:#1e2630">34 °C</div>
<div class="v" style="left:1130.85px;top:562px;width:70px;color:#c43232">100 °C</div>
<div class="v" style="left:1192.85px;top:562px;width:70px;color:#c43232">99 °C</div>
<div class="a" style="left:886px;top:573px;width:381px;height:12px;background:#efefef"></div>
<div class="a" style="left:1020px;top:573px;width:62px;height:12px;background:#cce3f8"></div>
<svg class="a" style="left:878px;top:574px" width="7" height="10" viewBox="0 0 7 10"><rect x="2.2" y="0.5" width="2.6" height="6.5" rx="1.3" fill="#e8e0d0" stroke="#8a8070" stroke-width="0.6"/><circle cx="3.5" cy="7.6" r="1.9" fill="#c8b8a0" stroke="#8a8070" stroke-width="0.6"/></svg>
<div class="a hw" style="left:888.5px;top:575px">Core Max</div>
<div class="v" style="left:1007.85px;top:574px;width:70px;color:#c43232">99 °C</div>
<div class="v" style="left:1069.05px;top:574px;width:70px;color:#1e2630">34 °C</div>
<div class="v" style="left:1130.85px;top:574px;width:70px;color:#c43232">100 °C</div>
<div class="v" style="left:1192.85px;top:574px;width:70px;color:#c43232">99 °C</div>
<svg class="a" style="left:878px;top:588px" width="5" height="7" viewBox="0 0 5 7"><path d="M0.8 0.8L3.8 3.5L0.8 6.2" stroke="#333" stroke-width="1.1" fill="none"/></svg>
<svg class="a" style="left:889px;top:586.8px" width="9" height="9" viewBox="0 0 9 9"><circle cx="4.5" cy="4.5" r="3.7" fill="#f4f4f4" stroke="#555" stroke-width="0.9"/><path d="M2.8 4.6H6.2" stroke="#555" stroke-width="0.8"/></svg>
<div class="a hw" style="left:900px;top:587px">Core Thermal Throttling</div>
<div class="v" style="left:1007.85px;top:586px;width:70px;color:#c43232">Yes</div>
<div class="v" style="left:1069.05px;top:586px;width:70px;color:#1e2630">No</div>
<div class="v" style="left:1130.85px;top:586px;width:70px;color:#c43232">Yes</div>
<div class="a" style="left:886px;top:597px;width:381px;height:12px;background:#efefef"></div>
<svg class="a" style="left:878px;top:600px" width="5" height="7" viewBox="0 0 5 7"><path d="M0.8 0.8L3.8 3.5L0.8 6.2" stroke="#333" stroke-width="1.1" fill="none"/></svg>
<svg class="a" style="left:889px;top:598.8px" width="9" height="9" viewBox="0 0 9 9"><circle cx="4.5" cy="4.5" r="3.7" fill="#f4f4f4" stroke="#555" stroke-width="0.9"/><path d="M2.8 4.6H6.2" stroke="#555" stroke-width="0.8"/></svg>
<div class="a hw" style="left:900px;top:599px">Core Critical Temperature</div>
<div class="v" style="left:1007.85px;top:598px;width:70px;color:#1e2630">No</div>
<div class="v" style="left:1069.05px;top:598px;width:70px;color:#1e2630">No</div>
<div class="v" style="left:1130.85px;top:598px;width:70px;color:#1e2630">No</div>
<svg class="a" style="left:878px;top:612px" width="5" height="7" viewBox="0 0 5 7"><path d="M0.8 0.8L3.8 3.5L0.8 6.2" stroke="#333" stroke-width="1.1" fill="none"/></svg>
<svg class="a" style="left:889px;top:610.8px" width="9" height="9" viewBox="0 0 9 9"><circle cx="4.5" cy="4.5" r="3.7" fill="#f4f4f4" stroke="#555" stroke-width="0.9"/><path d="M2.8 4.6H6.2" stroke="#555" stroke-width="0.8"/></svg>
<div class="a hw" style="left:900px;top:611px">Core Power Limit Exceeded</div>
<div class="v" style="left:1007.85px;top:610px;width:70px;color:#1e2630">No</div>
<div class="v" style="left:1069.05px;top:610px;width:70px;color:#1e2630">No</div>
<div class="v" style="left:1130.85px;top:610px;width:70px;color:#1e2630">No</div>
<div class="a" style="left:886px;top:622px;width:381px;height:12px;background:#efefef"></div>
<svg class="a" style="left:878px;top:623.8px" width="9" height="9" viewBox="0 0 9 9"><circle cx="4.5" cy="4.5" r="3.7" fill="#f4f4f4" stroke="#555" stroke-width="0.9"/><path d="M2.8 4.6H6.2" stroke="#555" stroke-width="0.8"/></svg>
<div class="a hw" style="left:888.5px;top:624px">Package/Ring Thermal Throttling</div>
<div class="v" style="left:1007.85px;top:623px;width:70px;color:#c43232">Yes</div>
<div class="v" style="left:1069.05px;top:623px;width:70px;color:#1e2630">No</div>
<div class="v" style="left:1130.85px;top:623px;width:70px;color:#c43232">Yes</div>
<svg class="a" style="left:878px;top:635.8px" width="9" height="9" viewBox="0 0 9 9"><circle cx="4.5" cy="4.5" r="3.7" fill="#f4f4f4" stroke="#555" stroke-width="0.9"/><path d="M2.8 4.6H6.2" stroke="#555" stroke-width="0.8"/></svg>
<div class="a hw" style="left:888.5px;top:636px">Package/Ring Critical Temperature</div>
<div class="v" style="left:1007.85px;top:635px;width:70px;color:#1e2630">No</div>
<div class="v" style="left:1069.05px;top:635px;width:70px;color:#1e2630">No</div>
<div class="v" style="left:1130.85px;top:635px;width:70px;color:#1e2630">No</div>
<div class="a" style="left:886px;top:646px;width:381px;height:12px;background:#efefef"></div>
<svg class="a" style="left:878px;top:647.8px" width="9" height="9" viewBox="0 0 9 9"><circle cx="4.5" cy="4.5" r="3.7" fill="#f4f4f4" stroke="#555" stroke-width="0.9"/><path d="M2.8 4.6H6.2" stroke="#555" stroke-width="0.8"/></svg>
<div class="a hw" style="left:888.5px;top:648px">Package/Ring Power Limit Exceeded</div>
<div class="v" style="left:1007.85px;top:647px;width:70px;color:#1e2630">No</div>
<div class="v" style="left:1069.05px;top:647px;width:70px;color:#1e2630">No</div>
<div class="v" style="left:1130.85px;top:647px;width:70px;color:#1e2630">No</div>
<div class="a" style="left:886px;top:670px;width:381px;height:11px;background:#dcdcdc"></div>
<svg class="a" style="left:865px;top:673px" width="7" height="5" viewBox="0 0 7 5"><path d="M0.8 0.8L3.5 3.8L6.2 0.8" stroke="#333" stroke-width="1.1" fill="none"/></svg>
<div class="a" style="left:878.5px;top:671px;width:6px;height:9.5px;background:#3a3a3a;border-radius:1px"></div>
<div class="a hw" style="left:889px;top:671px;font-style:italic;font-size:8px;letter-spacing:-0.12px;color:#333">CPU [#0]: Intel Core i9-14900KS: Enhanced</div>
<svg class="a" style="left:878px;top:683px" width="7" height="10" viewBox="0 0 7 10"><rect x="2.2" y="0.5" width="2.6" height="6.5" rx="1.3" fill="#e8e0d0" stroke="#8a8070" stroke-width="0.6"/><circle cx="3.5" cy="7.6" r="1.9" fill="#c8b8a0" stroke="#8a8070" stroke-width="0.6"/></svg>
<div class="a hw" style="left:888.5px;top:684px">CPU Package</div>
<div class="v" style="left:1007.85px;top:683px;width:70px;color:#c43232">99 °C</div>
<div class="v" style="left:1069.05px;top:683px;width:70px;color:#1e2630">35 °C</div>
<div class="v" style="left:1130.85px;top:683px;width:70px;color:#c43232">102 °C</div>
<div class="v" style="left:1192.85px;top:683px;width:70px;color:#c43232">99 °C</div>
<div class="a" style="left:886px;top:695px;width:381px;height:12px;background:#efefef"></div>
<svg class="a" style="left:878px;top:696px" width="7" height="10" viewBox="0 0 7 10"><rect x="2.2" y="0.5" width="2.6" height="6.5" rx="1.3" fill="#e8e0d0" stroke="#8a8070" stroke-width="0.6"/><circle cx="3.5" cy="7.6" r="1.9" fill="#c8b8a0" stroke="#8a8070" stroke-width="0.6"/></svg>
<div class="a hw" style="left:888.5px;top:697px">CPU IA Cores</div>
<div class="v" style="left:1007.85px;top:696px;width:70px;color:#c43232">99 °C</div>
<div class="v" style="left:1069.05px;top:696px;width:70px;color:#1e2630">35 °C</div>
<div class="v" style="left:1130.85px;top:696px;width:70px;color:#c43232">102 °C</div>
<div class="v" style="left:1192.85px;top:696px;width:70px;color:#c43232">99 °C</div>
<svg class="a" style="left:878px;top:708px" width="7" height="10" viewBox="0 0 7 10"><rect x="2.2" y="0.5" width="2.6" height="6.5" rx="1.3" fill="#e8e0d0" stroke="#8a8070" stroke-width="0.6"/><circle cx="3.5" cy="7.6" r="1.9" fill="#c8b8a0" stroke="#8a8070" stroke-width="0.6"/></svg>
<div class="a hw" style="left:888.5px;top:709px">CPU GT Cores (Graphics)</div>
<div class="v" style="left:1007.85px;top:708px;width:70px;color:#1e2630">49 °C</div>
<div class="v" style="left:1069.05px;top:708px;width:70px;color:#1e2630">30 °C</div>
<div class="v" style="left:1130.85px;top:708px;width:70px;color:#1e2630">67 °C</div>
<div class="v" style="left:1192.85px;top:708px;width:70px;color:#1e2630">49 °C</div>
<div class="a" style="left:886px;top:719px;width:381px;height:12px;background:#efefef"></div>
<div class="a" style="left:1020px;top:719px;width:62px;height:12px;background:#cce3f8"></div>
<svg class="a" style="left:878px;top:720px" width="7" height="10" viewBox="0 0 7 10"><rect x="2.2" y="0.5" width="2.6" height="6.5" rx="1.3" fill="#e8e0d0" stroke="#8a8070" stroke-width="0.6"/><circle cx="3.5" cy="7.6" r="1.9" fill="#c8b8a0" stroke="#8a8070" stroke-width="0.6"/></svg>
<div class="a hw" style="left:888.5px;top:721px">VR VCC Temperature (SVID)</div>
<div class="v" style="left:1007.85px;top:720px;width:70px;color:#1e2630">49 °C</div>
<div class="v" style="left:1069.05px;top:720px;width:70px;color:#1e2630">49 °C</div>
<div class="v" style="left:1130.85px;top:720px;width:70px;color:#1e2630">69 °C</div>
<div class="v" style="left:1192.85px;top:720px;width:70px;color:#1e2630">57 °C</div>
<svg class="a" style="left:878px;top:734px" width="5" height="7" viewBox="0 0 5 7"><path d="M0.8 0.8L3.8 3.5L0.8 6.2" stroke="#333" stroke-width="1.1" fill="none"/></svg>
<svg class="a" style="left:889px;top:732px" width="7" height="10" viewBox="0 0 7 10"><path d="M1.5 0.5H5L3.5 3.5H6L1.5 9.5L2.5 5.5H0.8Z" fill="#f6e27a" stroke="#b89a30" stroke-width="0.6"/></svg>
<div class="a hw" style="left:900px;top:733px">Voltage Offsets</div>
<div class="v" style="left:1069.05px;top:732px;width:70px;color:#1e2630">0.000 V</div>
<div class="v" style="left:1130.85px;top:732px;width:70px;color:#1e2630">0.000 V</div>
<div class="a" style="left:886px;top:743px;width:381px;height:12px;background:#efefef"></div>
<svg class="a" style="left:878px;top:744px" width="7" height="10" viewBox="0 0 7 10"><path d="M1.5 0.5H5L3.5 3.5H6L1.5 9.5L2.5 5.5H0.8Z" fill="#f6e27a" stroke="#b89a30" stroke-width="0.6"/></svg>
<div class="a hw" style="left:888.5px;top:745px">VDDQ TX Voltage</div>
<div class="v" style="left:1007.85px;top:744px;width:70px;color:#1e2630">1.400 V</div>
<div class="v" style="left:1069.05px;top:744px;width:70px;color:#1e2630">1.400 V</div>
<div class="v" style="left:1130.85px;top:744px;width:70px;color:#1e2630">1.400 V</div>
<div class="v" style="left:1192.85px;top:744px;width:70px;color:#1e2630">1.400 V</div>
<div class="a" style="left:1020px;top:755px;width:62px;height:13px;background:#cce3f8"></div>
<svg class="a" style="left:878px;top:756px" width="7" height="10" viewBox="0 0 7 10"><path d="M1.5 0.5H5L3.5 3.5H6L1.5 9.5L2.5 5.5H0.8Z" fill="#f6e27a" stroke="#b89a30" stroke-width="0.6"/></svg>
<div class="a hw" style="left:888.5px;top:757px">CPU Package Power</div>
<div class="v" style="left:1007.85px;top:756px;width:70px;color:#1e2630">380.381 W</div>
<div class="v" style="left:1069.05px;top:756px;width:70px;color:#1e2630">37.204 W</div>
<div class="v" style="left:1130.85px;top:756px;width:70px;color:#1e2630">396.603 W</div>
<div class="v" style="left:1192.85px;top:756px;width:70px;color:#1e2630">376.703 W</div>
<div class="a" style="left:886px;top:768px;width:381px;height:12px;background:#efefef"></div>
<div class="a" style="left:1020px;top:768px;width:62px;height:12px;background:#cce3f8"></div>
<svg class="a" style="left:878px;top:769px" width="7" height="10" viewBox="0 0 7 10"><path d="M1.5 0.5H5L3.5 3.5H6L1.5 9.5L2.5 5.5H0.8Z" fill="#f6e27a" stroke="#b89a30" stroke-width="0.6"/></svg>
<div class="a hw" style="left:888.5px;top:770px">IA Cores Power</div>
<div class="v" style="left:1007.85px;top:769px;width:70px;color:#1e2630">379.125 W</div>
<div class="v" style="left:1069.05px;top:769px;width:70px;color:#1e2630">36.022 W</div>
<div class="v" style="left:1130.85px;top:769px;width:70px;color:#1e2630">395.351 W</div>
<div class="v" style="left:1192.85px;top:769px;width:70px;color:#1e2630">375.446 W</div>
<svg class="a" style="left:878px;top:781px" width="7" height="10" viewBox="0 0 7 10"><path d="M1.5 0.5H5L3.5 3.5H6L1.5 9.5L2.5 5.5H0.8Z" fill="#f6e27a" stroke="#b89a30" stroke-width="0.6"/></svg>
<div class="a hw" style="left:888.5px;top:782px">Rest-of-Chip Power</div>
<div class="v" style="left:1007.85px;top:781px;width:70px;color:#1e2630">0.418 W</div>
<div class="v" style="left:1069.05px;top:781px;width:70px;color:#1e2630">0.416 W</div>
<div class="v" style="left:1130.85px;top:781px;width:70px;color:#1e2630">0.442 W</div>
<div class="v" style="left:1192.85px;top:781px;width:70px;color:#1e2630">0.419 W</div>
<div class="a" style="left:886px;top:792px;width:381px;height:12px;background:#efefef"></div>
<div class="a" style="left:1020px;top:792px;width:62px;height:12px;background:#cce3f8"></div>
<svg class="a" style="left:878px;top:793px" width="7" height="10" viewBox="0 0 7 10"><path d="M1.5 0.5H5L3.5 3.5H6L1.5 9.5L2.5 5.5H0.8Z" fill="#f6e27a" stroke="#b89a30" stroke-width="0.6"/></svg>
<div class="a hw" style="left:888.5px;top:794px">PL1 Power Limit (Static)</div>
<div class="v" style="left:1007.85px;top:793px;width:70px;color:#1e2630">4,095.9 W</div>
<div class="v" style="left:1069.05px;top:793px;width:70px;color:#1e2630">4,095.9 W</div>
<div class="v" style="left:1130.85px;top:793px;width:70px;color:#1e2630">4,095.9 W</div>
<div class="v" style="left:1192.85px;top:793px;width:70px;color:#1e2630">4,095.9 W</div>
<div class="a" style="left:1020px;top:804px;width:62px;height:12px;background:#cce3f8"></div>
<svg class="a" style="left:878px;top:805px" width="7" height="10" viewBox="0 0 7 10"><path d="M1.5 0.5H5L3.5 3.5H6L1.5 9.5L2.5 5.5H0.8Z" fill="#f6e27a" stroke="#b89a30" stroke-width="0.6"/></svg>
<div class="a hw" style="left:888.5px;top:806px">PL2 Power Limit (Static)</div>
<div class="v" style="left:1007.85px;top:805px;width:70px;color:#1e2630">4,095.9 W</div>
<div class="v" style="left:1069.05px;top:805px;width:70px;color:#1e2630">4,095.9 W</div>
<div class="v" style="left:1130.85px;top:805px;width:70px;color:#1e2630">4,095.9 W</div>
<div class="v" style="left:1192.85px;top:805px;width:70px;color:#1e2630">4,095.9 W</div>
<div class="a" style="left:886px;top:816px;width:381px;height:18px;background:#efefef"></div>
<svg class="a" style="left:878px;top:819px" width="5" height="7" viewBox="0 0 5 7"><path d="M0.8 0.8L3.8 3.5L0.8 6.2" stroke="#333" stroke-width="1.1" fill="none"/></svg>
<svg class="a" style="left:889px;top:817.8px" width="9" height="9" viewBox="0 0 9 9"><circle cx="4.5" cy="4.5" r="3.7" fill="#f4f4f4" stroke="#555" stroke-width="0.9"/><path d="M2.8 4.6H6.2" stroke="#555" stroke-width="0.8"/></svg>
<div class="a hw" style="left:900px;top:818px">OC Ratio Limits</div>
<div class="v" style="left:1069.05px;top:817px;width:70px;color:#1e2630">33.0 x</div>
<div class="v" style="left:1130.85px;top:817px;width:70px;color:#1e2630">62.0 x</div>
<div class="a" style="left:1207px;top:808px;font-size:10px;color:rgba(160,160,160,0.35);font-weight:bold">PConline</div>
</body></html>
